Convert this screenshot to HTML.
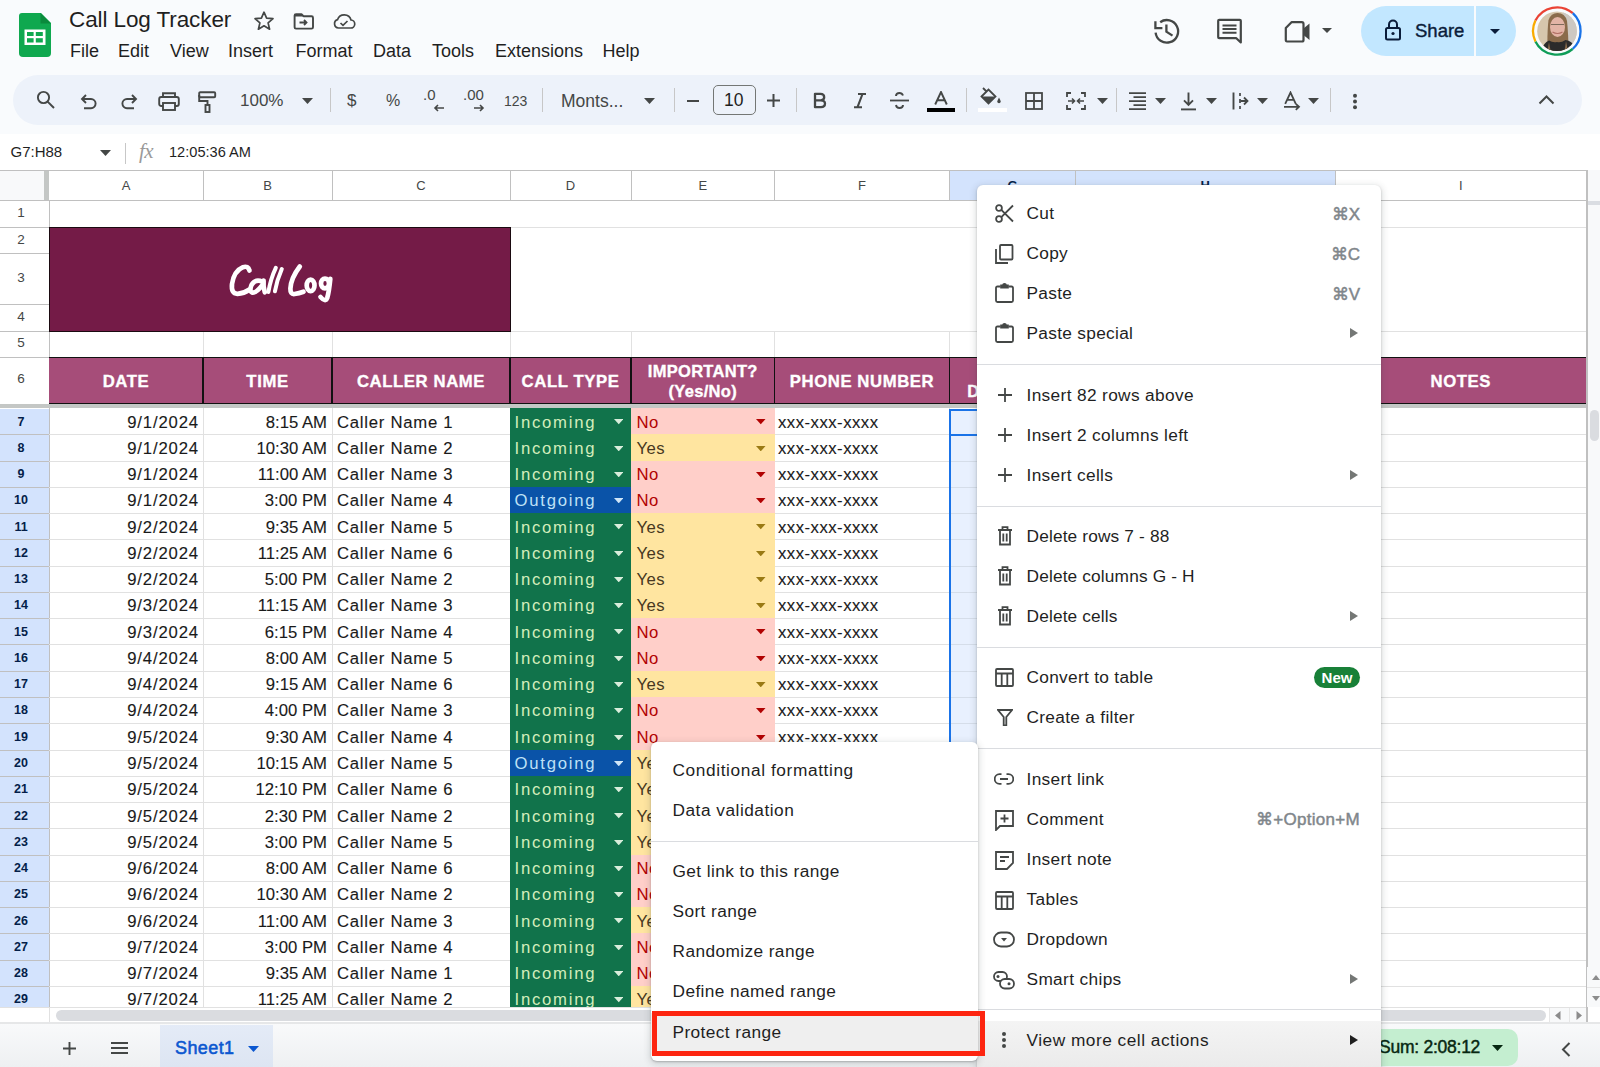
<!DOCTYPE html><html><head><meta charset="utf-8"><title>Call Log Tracker</title><style>
*{margin:0;padding:0;box-sizing:border-box}
html,body{width:1600px;height:1067px;overflow:hidden;background:#f9fbfd;font-family:"Liberation Sans",sans-serif;color:#1f1f1f}
div{position:absolute}
.t{white-space:pre}
</style></head><body>
<svg style="position:absolute;left:19px;top:13px;" width="32" height="44" viewBox="0 0 32 44">
<path d="M3 0 H22 L32 10 V40 Q32 44 28 44 H4 Q0 44 0 40 V3 Q0 0 3 0 Z" fill="#0fa84f"/>
<path d="M21.5 0 L32 10.5 H21.5 Z" fill="#0a8a3c"/>
<rect x="5.5" y="16.5" width="21" height="15.5" fill="#fff"/>
<rect x="8" y="19" width="6.6" height="4" fill="#0fa84f"/>
<rect x="16.8" y="19" width="7" height="4" fill="#0fa84f"/>
<rect x="8" y="25.2" width="6.6" height="4.3" fill="#0fa84f"/>
<rect x="16.8" y="25.2" width="7" height="4.3" fill="#0fa84f"/>
</svg>
<div class="t" style="left:69px;top:6px;height:28px;line-height:28px;font-size:22.5px;color:#1f1f1f;letter-spacing:-0.1px">Call Log Tracker</div>
<svg style="position:absolute;left:253px;top:10px;" width="22" height="22" viewBox="0 0 22 22"><path d="M11 2.2 L13.6 8.2 L20 8.7 L15.1 12.9 L16.6 19.2 L11 15.8 L5.4 19.2 L6.9 12.9 L2 8.7 L8.4 8.2 Z" fill="none" stroke="#444746" stroke-width="1.7" stroke-linejoin="round"/></svg>
<svg style="position:absolute;left:293px;top:12px;" width="22" height="18" viewBox="0 0 22 18"><path d="M3 2.2 H8.5 L10.5 4.2 H18.5 Q20 4.2 20 5.7 V15.2 Q20 16.6 18.5 16.6 H3 Q1.6 16.6 1.6 15.2 V3.6 Q1.6 2.2 3 2.2 Z" fill="none" stroke="#444746" stroke-width="1.9" stroke-linejoin="round"/><path d="M2 2.5 H8.5 L10.5 4.5 H2 Z" fill="#444746"/><path d="M6.5 10.5 H13.5 M11 8 L13.5 10.5 L11 13" fill="none" stroke="#444746" stroke-width="1.8"/></svg>
<svg style="position:absolute;left:332px;top:12px;" width="24" height="18" viewBox="0 0 24 18"><path d="M6.5 16 H18.5 A4 4 0 0 0 19 8 A7 7 0 0 0 5.6 7.6 A4.3 4.3 0 0 0 6.5 16 Z" fill="none" stroke="#444746" stroke-width="1.7"/><path d="M8.5 11 L11 13.4 L15.5 9" fill="none" stroke="#444746" stroke-width="1.7"/></svg>
<div class="t" style="left:70px;top:38px;height:26px;line-height:26px;font-size:18px;color:#1f1f1f">File</div>
<div class="t" style="left:118px;top:38px;height:26px;line-height:26px;font-size:18px;color:#1f1f1f">Edit</div>
<div class="t" style="left:170px;top:38px;height:26px;line-height:26px;font-size:18px;color:#1f1f1f">View</div>
<div class="t" style="left:228px;top:38px;height:26px;line-height:26px;font-size:18px;color:#1f1f1f">Insert</div>
<div class="t" style="left:295.5px;top:38px;height:26px;line-height:26px;font-size:18px;color:#1f1f1f">Format</div>
<div class="t" style="left:373px;top:38px;height:26px;line-height:26px;font-size:18px;color:#1f1f1f">Data</div>
<div class="t" style="left:432px;top:38px;height:26px;line-height:26px;font-size:18px;color:#1f1f1f">Tools</div>
<div class="t" style="left:495px;top:38px;height:26px;line-height:26px;font-size:18px;color:#1f1f1f">Extensions</div>
<div class="t" style="left:602.5px;top:38px;height:26px;line-height:26px;font-size:18px;color:#1f1f1f">Help</div>
<svg style="position:absolute;left:1153px;top:17px;" width="28" height="28" viewBox="0 0 28 28"><path d="M2.6 15.6 A11.3 11.3 0 1 0 7.2 5.2" fill="none" stroke="#444746" stroke-width="2.3"/><path d="M2.4 4.2 V11.2 H9.4" fill="none" stroke="#444746" stroke-width="2.3"/><path d="M13.4 7.5 V14.6 L19.5 18.6" fill="none" stroke="#444746" stroke-width="2.3"/></svg>
<svg style="position:absolute;left:1216px;top:18px;" width="27" height="27" viewBox="0 0 27 27"><path d="M2.2 2.8 Q2.2 1.8 3.2 1.8 H23.8 Q24.8 1.8 24.8 2.8 V24.5 L20.3 20.2 H3.2 Q2.2 20.2 2.2 19.2 Z" fill="none" stroke="#444746" stroke-width="2.2" stroke-linejoin="round"/><path d="M6.5 7.5 H20.5 M6.5 11.1 H20.5 M6.5 14.8 H20.5" stroke="#444746" stroke-width="2"/></svg>
<svg style="position:absolute;left:1284px;top:20px;" width="28" height="24" viewBox="0 0 28 24"><path d="M7.5 2.2 H17.8 Q19.5 2.2 19.5 4 V20 Q19.5 21.5 18 21.5 H3 Q1.8 21.5 1.8 20 V8 Z" fill="none" stroke="#444746" stroke-width="2.2" stroke-linejoin="round"/><path d="M19.5 8.5 L25.5 3.5 V20 L19.5 15 Z" fill="#444746"/></svg>
<svg style="position:absolute;left:1321px;top:27px;" width="12" height="7" viewBox="0 0 12 7"><path d="M1 1 H11 L6 6 Z" fill="#444746"/></svg>
<div style="left:1361px;top:6px;width:155px;height:50px;background:#c2e7ff;border-radius:25px"></div>
<div style="left:1474px;top:6px;width:1.5px;height:50px;background:#f9fbfd"></div>
<svg style="position:absolute;left:1384px;top:19px;" width="18" height="22" viewBox="0 0 18 22"><rect x="2" y="9" width="14" height="11.5" rx="1.5" fill="none" stroke="#0b1d3a" stroke-width="2"/><path d="M5 9 V5.5 A4 4 0 0 1 13 5.5 V9" fill="none" stroke="#0b1d3a" stroke-width="2"/><circle cx="9" cy="14.5" r="1.6" fill="#0b1d3a"/></svg>
<div class="t" style="left:1415px;top:17px;height:28px;line-height:28px;font-size:18.5px;color:#0b1d3a;-webkit-text-stroke:0.4px #0b1d3a;letter-spacing:0px">Share</div>
<svg style="position:absolute;left:1489px;top:28px;" width="12" height="7" viewBox="0 0 12 7"><path d="M1 1 H11 L6 6 Z" fill="#0b1d3a"/></svg>
<svg style="position:absolute;left:1527px;top:2px;" width="60" height="60" viewBox="0 0 60 60">
<defs><clipPath id="avc"><circle cx="30" cy="29.2" r="19.8"/></clipPath></defs>
<path d="M8.4 18.6 A24.3 24.3 0 0 1 45.8 11.2" fill="none" stroke="#ea4335" stroke-width="2.3"/>
<path d="M45.8 11.2 A24.3 24.3 0 0 1 45.6 47" fill="none" stroke="#1a73e8" stroke-width="2.3"/>
<path d="M45.6 47 A24.3 24.3 0 0 1 8.4 39.4" fill="none" stroke="#0f9d58" stroke-width="2.3"/>
<path d="M8.4 39.4 A24.3 24.3 0 0 1 8.4 18.6" fill="none" stroke="#f9ab00" stroke-width="2.3"/>
<g clip-path="url(#avc)">
<rect x="0" y="0" width="60" height="60" fill="#d6c6ad"/>
<rect x="36" y="0" width="24" height="60" fill="#cdc8c2"/>
<path d="M20.5 52 Q20 30 21.5 18 Q24 11 30.5 11 Q38 11 40 19 Q41.5 32 41.5 52 Z" fill="#8a6b4b"/>
<ellipse cx="30.5" cy="25" rx="7.5" ry="10" fill="#e3b4a6"/>
<path d="M24 22.5 H37" stroke="#7d6a5c" stroke-width="1.1"/>
<path d="M25.5 30 Q30.5 33 35.5 30" fill="none" stroke="#b06f64" stroke-width="1.2"/>
<path d="M14 50 Q16 41 22 38.5 Q26 41 30 40 Q34 41 38.5 38 Q45 39 48 45 L48 60 H14 Z" fill="#2b2b2b"/>
<path d="M22 40 Q23 48 25 52 L20 52 Z M39 39 Q38 48 36.5 52 L41.5 52 Z" fill="#8a6b4b"/>
</g>
</svg>
<div style="left:13px;top:75px;width:1569px;height:50px;background:#edf2fa;border-radius:25px"></div>
<svg style="position:absolute;left:36px;top:90px;" width="20" height="20" viewBox="0 0 20 20"><circle cx="7.5" cy="7.5" r="5.6" fill="none" stroke="#444746" stroke-width="1.9"/><path d="M11.6 11.6 L18 18" stroke="#444746" stroke-width="2"/></svg>
<svg style="position:absolute;left:80px;top:93px;" width="18" height="17" viewBox="0 0 18 17"><path d="M6 2 L2 6 L6 10" fill="none" stroke="#444746" stroke-width="1.9"/><path d="M2.5 6 H11 A4.6 4.6 0 0 1 11 15.2 H4" fill="none" stroke="#444746" stroke-width="1.9"/></svg>
<svg style="position:absolute;left:120px;top:93px;" width="18" height="17" viewBox="0 0 18 17"><path d="M12 2 L16 6 L12 10" fill="none" stroke="#444746" stroke-width="1.9"/><path d="M15.5 6 H7 A4.6 4.6 0 0 0 7 15.2 H14" fill="none" stroke="#444746" stroke-width="1.9"/></svg>
<svg style="position:absolute;left:158px;top:92px;" width="22" height="19" viewBox="0 0 22 19"><path d="M5 5 V1.2 H17 V5" fill="none" stroke="#444746" stroke-width="1.9"/><rect x="1.2" y="5" width="19.6" height="9" rx="2" fill="none" stroke="#444746" stroke-width="1.9"/><rect x="5" y="11" width="12" height="7" fill="#edf2fa" stroke="#444746" stroke-width="1.9"/></svg>
<svg style="position:absolute;left:198px;top:91px;" width="19" height="22" viewBox="0 0 19 22"><rect x="1.2" y="1.2" width="16" height="5" rx="1" fill="none" stroke="#444746" stroke-width="1.9"/><path d="M1.2 4 V10 H9.5 V14" fill="none" stroke="#444746" stroke-width="1.9"/><rect x="7.5" y="14" width="4" height="7" fill="none" stroke="#444746" stroke-width="1.9"/></svg>
<div class="t" style="left:240px;top:88px;height:26px;line-height:26px;font-size:17px;color:#444746">100%</div>
<svg style="position:absolute;left:302px;top:98px;" width="11" height="6" viewBox="0 0 11 6"><path d="M0 0 H11 L5.5 6 Z" fill="#444746"/></svg>
<div style="left:329.5px;top:88px;width:1px;height:24px;background:#c7c7c7"></div>
<div class="t" style="left:347px;top:88px;height:26px;line-height:26px;font-size:17px;color:#444746">$</div>
<div class="t" style="left:386px;top:88px;height:26px;line-height:26px;font-size:16px;color:#444746">%</div>
<div class="t" style="left:423px;top:84px;height:22px;line-height:22px;font-size:15px;color:#444746">.0</div>
<svg style="position:absolute;left:433px;top:104px;" width="12" height="8" viewBox="0 0 12 8"><path d="M11 4 H2 M5 1 L2 4 L5 7" fill="none" stroke="#444746" stroke-width="1.6"/></svg>
<div class="t" style="left:463px;top:84px;height:22px;line-height:22px;font-size:15px;color:#444746">.00</div>
<svg style="position:absolute;left:473px;top:104px;" width="12" height="8" viewBox="0 0 12 8"><path d="M1 4 H10 M7 1 L10 4 L7 7" fill="none" stroke="#444746" stroke-width="1.6"/></svg>
<div class="t" style="left:504px;top:88px;height:26px;line-height:26px;font-size:14px;color:#444746">123</div>
<div style="left:541.5px;top:88px;width:1px;height:24px;background:#c7c7c7"></div>
<div class="t" style="left:561px;top:88px;height:26px;line-height:26px;font-size:17.5px;color:#444746">Monts...</div>
<svg style="position:absolute;left:644px;top:98px;" width="11" height="6" viewBox="0 0 11 6"><path d="M0 0 H11 L5.5 6 Z" fill="#444746"/></svg>
<div style="left:674px;top:88px;width:1px;height:24px;background:#c7c7c7"></div>
<div style="left:687px;top:99.5px;width:12px;height:2px;background:#444746"></div>
<div style="left:713px;top:85px;width:43px;height:30px;border:1.3px solid #747775;border-radius:5px"></div>
<div class="t" style="left:724px;top:87px;height:26px;line-height:26px;font-size:17.5px;color:#1f1f1f">10</div>
<svg style="position:absolute;left:767px;top:94px;" width="13" height="13" viewBox="0 0 13 13"><path d="M6.5 0 V13 M0 6.5 H13" stroke="#444746" stroke-width="2"/></svg>
<div style="left:795.5px;top:88px;width:1px;height:24px;background:#c7c7c7"></div>
<svg style="position:absolute;left:812px;top:92px;" width="16" height="17" viewBox="0 0 16 17"><path d="M3 1.8 H8.5 Q12.2 1.8 12.2 5.3 Q12.2 8.2 8.8 8.3 Q13 8.4 13 11.6 Q13 15.2 9 15.2 H3 Z M3 8.3 H8.8" fill="none" stroke="#444746" stroke-width="2.3" stroke-linejoin="round"/></svg>
<svg style="position:absolute;left:852px;top:92px;" width="16" height="17" viewBox="0 0 16 17"><path d="M6 2 H14 M2 15.2 H10 M10.5 2 L5.5 15.2" fill="none" stroke="#444746" stroke-width="2.1"/></svg>
<svg style="position:absolute;left:889px;top:91px;" width="21" height="19" viewBox="0 0 21 19"><path d="M1 9.5 H20" stroke="#444746" stroke-width="1.8"/><path d="M14 4.5 Q13 2 10.5 2 Q7 2 7 5 M7 14 Q7.5 17 10.5 17 Q14 17 14 14" fill="none" stroke="#444746" stroke-width="1.9"/></svg>
<svg style="position:absolute;left:934px;top:91px;" width="14" height="14" viewBox="0 0 14 14"><path d="M1.2 13.5 L7 1 L12.8 13.5 M3.3 9.3 H10.7" fill="none" stroke="#444746" stroke-width="1.9"/></svg>
<div style="left:927px;top:107.5px;width:28px;height:4.5px;background:#000"></div>
<div style="left:966px;top:88px;width:1px;height:24px;background:#c7c7c7"></div>
<svg style="position:absolute;left:979px;top:86px;" width="26" height="20" viewBox="0 0 26 20"><path d="M4 2 L7 5 M2.5 10.5 L9.5 3.5 L16.5 10.5 L9.5 17.5 Z" fill="none" stroke="#444746" stroke-width="1.8"/><path d="M2.5 10.5 H16.5 L9.5 17.5 Z" fill="#444746"/><path d="M20 11.5 Q18.3 14.5 18.3 15.5 A1.7 1.7 0 0 0 21.7 15.5 Q21.7 14.5 20 11.5Z" fill="#444746"/></svg>
<div style="left:978px;top:107.5px;width:29px;height:4.5px;background:#fff"></div>
<svg style="position:absolute;left:1025px;top:92px;" width="18" height="18" viewBox="0 0 18 18"><rect x="1" y="1" width="16" height="16" fill="none" stroke="#444746" stroke-width="1.8"/><path d="M9 1 V17 M1 9 H17" stroke="#444746" stroke-width="1.8"/></svg>
<svg style="position:absolute;left:1066px;top:92px;" width="20" height="18" viewBox="0 0 20 18"><path d="M1 5 V1 H5 M15 1 H19 V5 M1 13 V17 H5 M15 17 H19 V13" fill="none" stroke="#444746" stroke-width="1.8"/><path d="M2 9 H8 M6 6.5 L8.5 9 L6 11.5 M18 9 H12 M14 6.5 L11.5 9 L14 11.5" fill="none" stroke="#444746" stroke-width="1.6"/></svg>
<svg style="position:absolute;left:1097px;top:98px;" width="11" height="6" viewBox="0 0 11 6"><path d="M0 0 H11 L5.5 6 Z" fill="#444746"/></svg>
<div style="left:1116px;top:88px;width:1px;height:24px;background:#c7c7c7"></div>
<svg style="position:absolute;left:1128px;top:91px;" width="19" height="20" viewBox="0 0 19 20"><path d="M1 2.2 H18 M5.5 6.2 H18 M1 10.2 H18 M5.5 14.2 H18 M1 18.2 H18" stroke="#444746" stroke-width="1.8"/></svg>
<svg style="position:absolute;left:1155px;top:98px;" width="11" height="6" viewBox="0 0 11 6"><path d="M0 0 H11 L5.5 6 Z" fill="#444746"/></svg>
<svg style="position:absolute;left:1180px;top:91px;" width="17" height="21" viewBox="0 0 17 21"><path d="M8.5 1.5 V13.8 M4 9.3 L8.5 13.8 L13 9.3" fill="none" stroke="#444746" stroke-width="1.9"/><path d="M1 18.4 H16" stroke="#444746" stroke-width="1.9"/></svg>
<svg style="position:absolute;left:1206px;top:98px;" width="11" height="6" viewBox="0 0 11 6"><path d="M0 0 H11 L5.5 6 Z" fill="#444746"/></svg>
<svg style="position:absolute;left:1231px;top:92px;" width="18" height="18" viewBox="0 0 18 18"><path d="M2.5 0.5 V17.5" stroke="#444746" stroke-width="1.9"/><path d="M9.5 9 H16.5 M13 5.5 L16.5 9 L13 12.5" fill="none" stroke="#444746" stroke-width="1.8"/><path d="M9 1 V4 M9 7 V11 M9 14 V17" stroke="#444746" stroke-width="1.7"/></svg>
<svg style="position:absolute;left:1257px;top:98px;" width="11" height="6" viewBox="0 0 11 6"><path d="M0 0 H11 L5.5 6 Z" fill="#444746"/></svg>
<svg style="position:absolute;left:1283px;top:91px;" width="19" height="21" viewBox="0 0 19 21"><path d="M2.2 12.8 L7.5 1.5 L12.8 12.8 M4.2 8.8 H10.8" fill="none" stroke="#444746" stroke-width="1.8"/><path d="M1 15.8 H16 M12.8 12.8 L16 15.8 L12.8 18.8" fill="none" stroke="#444746" stroke-width="1.8"/></svg>
<svg style="position:absolute;left:1308px;top:98px;" width="11" height="6" viewBox="0 0 11 6"><path d="M0 0 H11 L5.5 6 Z" fill="#444746"/></svg>
<div style="left:1329.5px;top:88px;width:1px;height:24px;background:#c7c7c7"></div>
<svg style="position:absolute;left:1351px;top:92px;" width="8" height="18" viewBox="0 0 8 18"><circle cx="4" cy="3.8" r="2" fill="#444746"/><circle cx="4" cy="9.6" r="2" fill="#444746"/><circle cx="4" cy="15.3" r="2" fill="#444746"/></svg>
<svg style="position:absolute;left:1538px;top:95px;" width="17" height="10" viewBox="0 0 17 10"><path d="M1.5 8.5 L8.5 1.5 L15.5 8.5" fill="none" stroke="#444746" stroke-width="2"/></svg>
<div style="left:0px;top:134px;width:1600px;height:36.5px;background:#fff"></div>
<div class="t" style="left:10.5px;top:138.5px;height:26px;line-height:26px;font-size:15px;color:#1f1f1f">G7:H88</div>
<svg style="position:absolute;left:100px;top:149.5px;" width="11" height="6" viewBox="0 0 11 6"><path d="M0 0 H11 L5.5 6 Z" fill="#444746"/></svg>
<div style="left:125px;top:142.5px;width:1.3px;height:21px;background:#c7c7c7"></div>
<div class="t" style="left:139px;top:137px;height:28px;line-height:28px;font-size:21px;font-style:italic;font-family:'Liberation Serif';color:#9a9a9a;letter-spacing:-0.5px">fx</div>
<div class="t" style="left:169px;top:138.5px;height:26px;line-height:26px;font-size:14.6px;color:#1f1f1f">12:05:36 AM</div>
<div style="left:0px;top:170px;width:1600px;height:853px;background:#fff"></div>
<div style="left:0px;top:170px;width:1586.5px;height:30.5px;background:#fff"></div>
<div style="left:0px;top:170.5px;width:44px;height:30px;background:#f8f9fa"></div>
<div style="left:44px;top:170.5px;width:5px;height:30px;background:#c4c7c5"></div>
<div style="left:949.5px;top:170.5px;width:386px;height:30px;background:#d3e3fd"></div>
<div style="left:0px;top:170px;width:1600px;height:1px;background:#c0c0c0"></div>
<div style="left:0px;top:200px;width:1586.5px;height:1px;background:#c0c0c0"></div>
<div class="t" style="left:49px;top:171px;width:154px;height:29px;line-height:29px;text-align:center;font-size:13px;color:#444746">A</div>
<div class="t" style="left:203px;top:171px;width:129px;height:29px;line-height:29px;text-align:center;font-size:13px;color:#444746">B</div>
<div class="t" style="left:332px;top:171px;width:178px;height:29px;line-height:29px;text-align:center;font-size:13px;color:#444746">C</div>
<div class="t" style="left:510px;top:171px;width:121px;height:29px;line-height:29px;text-align:center;font-size:13px;color:#444746">D</div>
<div class="t" style="left:631px;top:171px;width:143.5px;height:29px;line-height:29px;text-align:center;font-size:13px;color:#444746">E</div>
<div class="t" style="left:774.5px;top:171px;width:175.0px;height:29px;line-height:29px;text-align:center;font-size:13px;color:#444746">F</div>
<div class="t" style="left:949.5px;top:171px;width:126.0px;height:29px;line-height:29px;text-align:center;font-size:13px;color:#041e49;font-weight:bold">G</div>
<div class="t" style="left:1075.5px;top:171px;width:259.5px;height:29px;line-height:29px;text-align:center;font-size:13px;color:#041e49;font-weight:bold">H</div>
<div class="t" style="left:1335px;top:171px;width:251.5px;height:29px;line-height:29px;text-align:center;font-size:13px;color:#444746">I</div>
<div style="left:202.5px;top:170.5px;width:1px;height:30px;background:#c0c0c0"></div>
<div style="left:331.5px;top:170.5px;width:1px;height:30px;background:#c0c0c0"></div>
<div style="left:509.5px;top:170.5px;width:1px;height:30px;background:#c0c0c0"></div>
<div style="left:630.5px;top:170.5px;width:1px;height:30px;background:#c0c0c0"></div>
<div style="left:774.0px;top:170.5px;width:1px;height:30px;background:#c0c0c0"></div>
<div style="left:949.0px;top:170.5px;width:1px;height:30px;background:#c0c0c0"></div>
<div style="left:1075.0px;top:170.5px;width:1px;height:30px;background:#c0c0c0"></div>
<div style="left:1334.5px;top:170.5px;width:1px;height:30px;background:#c0c0c0"></div>
<div style="left:1586.0px;top:170.5px;width:1px;height:30px;background:#c0c0c0"></div>
<div style="left:0px;top:200.5px;width:49px;height:823px;background:#fff"></div>
<div style="left:0px;top:408.5px;width:49px;height:614.5px;background:#d3e3fd"></div>
<div style="left:48.5px;top:200.5px;width:1px;height:823px;background:#c0c0c0"></div>
<div class="t" style="left:0px;top:200.5px;width:42px;height:27.0px;line-height:24.0px;text-align:center;font-size:13.5px;color:#444746">1</div>
<div style="left:0px;top:227.0px;width:49px;height:1px;background:#c0c0c0"></div>
<div class="t" style="left:0px;top:227.5px;width:42px;height:26.19999999999999px;line-height:23.19999999999999px;text-align:center;font-size:13.5px;color:#444746">2</div>
<div style="left:0px;top:253.2px;width:49px;height:1px;background:#c0c0c0"></div>
<div class="t" style="left:0px;top:253.7px;width:42px;height:51.0px;line-height:48.0px;text-align:center;font-size:13.5px;color:#444746">3</div>
<div style="left:0px;top:304.2px;width:49px;height:1px;background:#c0c0c0"></div>
<div class="t" style="left:0px;top:304.7px;width:42px;height:26.5px;line-height:23.5px;text-align:center;font-size:13.5px;color:#444746">4</div>
<div style="left:0px;top:330.7px;width:49px;height:1px;background:#c0c0c0"></div>
<div class="t" style="left:0px;top:331.2px;width:42px;height:26.19999999999999px;line-height:23.19999999999999px;text-align:center;font-size:13.5px;color:#444746">5</div>
<div style="left:0px;top:356.9px;width:49px;height:1px;background:#c0c0c0"></div>
<div class="t" style="left:0px;top:357.4px;width:42px;height:46.30000000000001px;line-height:43.30000000000001px;text-align:center;font-size:13.5px;color:#444746">6</div>
<div class="t" style="left:0px;top:408.5px;width:42px;height:26.269999999999982px;line-height:27.269999999999982px;text-align:center;font-size:12.5px;color:#041e49;font-weight:bold">7</div>
<div style="left:0px;top:434.27px;width:49px;height:1px;background:#c0c0c0"></div>
<div class="t" style="left:0px;top:434.77px;width:42px;height:26.27000000000004px;line-height:27.27000000000004px;text-align:center;font-size:12.5px;color:#041e49;font-weight:bold">8</div>
<div style="left:0px;top:460.54px;width:49px;height:1px;background:#c0c0c0"></div>
<div class="t" style="left:0px;top:461.04px;width:42px;height:26.269999999999982px;line-height:27.269999999999982px;text-align:center;font-size:12.5px;color:#041e49;font-weight:bold">9</div>
<div style="left:0px;top:486.81px;width:49px;height:1px;background:#c0c0c0"></div>
<div class="t" style="left:0px;top:487.31px;width:42px;height:26.27000000000004px;line-height:27.27000000000004px;text-align:center;font-size:12.5px;color:#041e49;font-weight:bold">10</div>
<div style="left:0px;top:513.08px;width:49px;height:1px;background:#c0c0c0"></div>
<div class="t" style="left:0px;top:513.58px;width:42px;height:26.269999999999982px;line-height:27.269999999999982px;text-align:center;font-size:12.5px;color:#041e49;font-weight:bold">11</div>
<div style="left:0px;top:539.35px;width:49px;height:1px;background:#c0c0c0"></div>
<div class="t" style="left:0px;top:539.85px;width:42px;height:26.269999999999982px;line-height:27.269999999999982px;text-align:center;font-size:12.5px;color:#041e49;font-weight:bold">12</div>
<div style="left:0px;top:565.62px;width:49px;height:1px;background:#c0c0c0"></div>
<div class="t" style="left:0px;top:566.12px;width:42px;height:26.269999999999982px;line-height:27.269999999999982px;text-align:center;font-size:12.5px;color:#041e49;font-weight:bold">13</div>
<div style="left:0px;top:591.89px;width:49px;height:1px;background:#c0c0c0"></div>
<div class="t" style="left:0px;top:592.39px;width:42px;height:26.269999999999982px;line-height:27.269999999999982px;text-align:center;font-size:12.5px;color:#041e49;font-weight:bold">14</div>
<div style="left:0px;top:618.16px;width:49px;height:1px;background:#c0c0c0"></div>
<div class="t" style="left:0px;top:618.66px;width:42px;height:26.270000000000095px;line-height:27.270000000000095px;text-align:center;font-size:12.5px;color:#041e49;font-weight:bold">15</div>
<div style="left:0px;top:644.4300000000001px;width:49px;height:1px;background:#c0c0c0"></div>
<div class="t" style="left:0px;top:644.9300000000001px;width:42px;height:26.269999999999982px;line-height:27.269999999999982px;text-align:center;font-size:12.5px;color:#041e49;font-weight:bold">16</div>
<div style="left:0px;top:670.7px;width:49px;height:1px;background:#c0c0c0"></div>
<div class="t" style="left:0px;top:671.2px;width:42px;height:26.269999999999982px;line-height:27.269999999999982px;text-align:center;font-size:12.5px;color:#041e49;font-weight:bold">17</div>
<div style="left:0px;top:696.97px;width:49px;height:1px;background:#c0c0c0"></div>
<div class="t" style="left:0px;top:697.47px;width:42px;height:26.269999999999982px;line-height:27.269999999999982px;text-align:center;font-size:12.5px;color:#041e49;font-weight:bold">18</div>
<div style="left:0px;top:723.24px;width:49px;height:1px;background:#c0c0c0"></div>
<div class="t" style="left:0px;top:723.74px;width:42px;height:26.269999999999982px;line-height:27.269999999999982px;text-align:center;font-size:12.5px;color:#041e49;font-weight:bold">19</div>
<div style="left:0px;top:749.51px;width:49px;height:1px;background:#c0c0c0"></div>
<div class="t" style="left:0px;top:750.01px;width:42px;height:26.269999999999982px;line-height:27.269999999999982px;text-align:center;font-size:12.5px;color:#041e49;font-weight:bold">20</div>
<div style="left:0px;top:775.78px;width:49px;height:1px;background:#c0c0c0"></div>
<div class="t" style="left:0px;top:776.28px;width:42px;height:26.269999999999982px;line-height:27.269999999999982px;text-align:center;font-size:12.5px;color:#041e49;font-weight:bold">21</div>
<div style="left:0px;top:802.05px;width:49px;height:1px;background:#c0c0c0"></div>
<div class="t" style="left:0px;top:802.55px;width:42px;height:26.269999999999982px;line-height:27.269999999999982px;text-align:center;font-size:12.5px;color:#041e49;font-weight:bold">22</div>
<div style="left:0px;top:828.3199999999999px;width:49px;height:1px;background:#c0c0c0"></div>
<div class="t" style="left:0px;top:828.8199999999999px;width:42px;height:26.269999999999982px;line-height:27.269999999999982px;text-align:center;font-size:12.5px;color:#041e49;font-weight:bold">23</div>
<div style="left:0px;top:854.5899999999999px;width:49px;height:1px;background:#c0c0c0"></div>
<div class="t" style="left:0px;top:855.0899999999999px;width:42px;height:26.270000000000095px;line-height:27.270000000000095px;text-align:center;font-size:12.5px;color:#041e49;font-weight:bold">24</div>
<div style="left:0px;top:880.86px;width:49px;height:1px;background:#c0c0c0"></div>
<div class="t" style="left:0px;top:881.36px;width:42px;height:26.269999999999982px;line-height:27.269999999999982px;text-align:center;font-size:12.5px;color:#041e49;font-weight:bold">25</div>
<div style="left:0px;top:907.13px;width:49px;height:1px;background:#c0c0c0"></div>
<div class="t" style="left:0px;top:907.63px;width:42px;height:26.269999999999982px;line-height:27.269999999999982px;text-align:center;font-size:12.5px;color:#041e49;font-weight:bold">26</div>
<div style="left:0px;top:933.4px;width:49px;height:1px;background:#c0c0c0"></div>
<div class="t" style="left:0px;top:933.9px;width:42px;height:26.269999999999982px;line-height:27.269999999999982px;text-align:center;font-size:12.5px;color:#041e49;font-weight:bold">27</div>
<div style="left:0px;top:959.67px;width:49px;height:1px;background:#c0c0c0"></div>
<div class="t" style="left:0px;top:960.17px;width:42px;height:26.269999999999982px;line-height:27.269999999999982px;text-align:center;font-size:12.5px;color:#041e49;font-weight:bold">28</div>
<div style="left:0px;top:985.9399999999999px;width:49px;height:1px;background:#c0c0c0"></div>
<div class="t" style="left:0px;top:986.4399999999999px;width:42px;height:26.270000000000095px;line-height:27.270000000000095px;text-align:center;font-size:12.5px;color:#041e49;font-weight:bold">29</div>
<div style="left:0px;top:1012.21px;width:49px;height:1px;background:#c0c0c0"></div>
<div style="left:49px;top:227.0px;width:1537.5px;height:1px;background:#e1e1e1"></div>
<div style="left:49px;top:330.7px;width:1537.5px;height:1px;background:#e1e1e1"></div>
<div style="left:49px;top:356.9px;width:1537.5px;height:1px;background:#e1e1e1"></div>
<div style="left:49px;top:434.27px;width:1537.5px;height:1px;background:#e1e1e1"></div>
<div style="left:49px;top:460.54px;width:1537.5px;height:1px;background:#e1e1e1"></div>
<div style="left:49px;top:486.81px;width:1537.5px;height:1px;background:#e1e1e1"></div>
<div style="left:49px;top:513.08px;width:1537.5px;height:1px;background:#e1e1e1"></div>
<div style="left:49px;top:539.35px;width:1537.5px;height:1px;background:#e1e1e1"></div>
<div style="left:49px;top:565.62px;width:1537.5px;height:1px;background:#e1e1e1"></div>
<div style="left:49px;top:591.89px;width:1537.5px;height:1px;background:#e1e1e1"></div>
<div style="left:49px;top:618.16px;width:1537.5px;height:1px;background:#e1e1e1"></div>
<div style="left:49px;top:644.4300000000001px;width:1537.5px;height:1px;background:#e1e1e1"></div>
<div style="left:49px;top:670.7px;width:1537.5px;height:1px;background:#e1e1e1"></div>
<div style="left:49px;top:696.97px;width:1537.5px;height:1px;background:#e1e1e1"></div>
<div style="left:49px;top:723.24px;width:1537.5px;height:1px;background:#e1e1e1"></div>
<div style="left:49px;top:749.51px;width:1537.5px;height:1px;background:#e1e1e1"></div>
<div style="left:49px;top:775.78px;width:1537.5px;height:1px;background:#e1e1e1"></div>
<div style="left:49px;top:802.05px;width:1537.5px;height:1px;background:#e1e1e1"></div>
<div style="left:49px;top:828.3199999999999px;width:1537.5px;height:1px;background:#e1e1e1"></div>
<div style="left:49px;top:854.5899999999999px;width:1537.5px;height:1px;background:#e1e1e1"></div>
<div style="left:49px;top:880.86px;width:1537.5px;height:1px;background:#e1e1e1"></div>
<div style="left:49px;top:907.13px;width:1537.5px;height:1px;background:#e1e1e1"></div>
<div style="left:49px;top:933.4px;width:1537.5px;height:1px;background:#e1e1e1"></div>
<div style="left:49px;top:959.67px;width:1537.5px;height:1px;background:#e1e1e1"></div>
<div style="left:49px;top:985.9399999999999px;width:1537.5px;height:1px;background:#e1e1e1"></div>
<div style="left:49px;top:1012.21px;width:1537.5px;height:1px;background:#e1e1e1"></div>
<div style="left:202.5px;top:331.2px;width:1px;height:691.8px;background:#e1e1e1"></div>
<div style="left:331.5px;top:331.2px;width:1px;height:691.8px;background:#e1e1e1"></div>
<div style="left:509.5px;top:331.2px;width:1px;height:691.8px;background:#e1e1e1"></div>
<div style="left:630.5px;top:331.2px;width:1px;height:691.8px;background:#e1e1e1"></div>
<div style="left:774.0px;top:331.2px;width:1px;height:691.8px;background:#e1e1e1"></div>
<div style="left:949.0px;top:331.2px;width:1px;height:691.8px;background:#e1e1e1"></div>
<div style="left:1075.0px;top:331.2px;width:1px;height:691.8px;background:#e1e1e1"></div>
<div style="left:1334.5px;top:331.2px;width:1px;height:691.8px;background:#e1e1e1"></div>
<div style="left:1586.0px;top:331.2px;width:1px;height:691.8px;background:#e1e1e1"></div>
<div style="left:949.5px;top:408.5px;width:386px;height:614.5px;background:#e8f0fe"></div>
<div style="left:949.5px;top:434.27px;width:386px;height:1px;background:#d5dde9"></div>
<div style="left:949.5px;top:460.54px;width:386px;height:1px;background:#d5dde9"></div>
<div style="left:949.5px;top:486.81px;width:386px;height:1px;background:#d5dde9"></div>
<div style="left:949.5px;top:513.08px;width:386px;height:1px;background:#d5dde9"></div>
<div style="left:949.5px;top:539.35px;width:386px;height:1px;background:#d5dde9"></div>
<div style="left:949.5px;top:565.62px;width:386px;height:1px;background:#d5dde9"></div>
<div style="left:949.5px;top:591.89px;width:386px;height:1px;background:#d5dde9"></div>
<div style="left:949.5px;top:618.16px;width:386px;height:1px;background:#d5dde9"></div>
<div style="left:949.5px;top:644.4300000000001px;width:386px;height:1px;background:#d5dde9"></div>
<div style="left:949.5px;top:670.7px;width:386px;height:1px;background:#d5dde9"></div>
<div style="left:949.5px;top:696.97px;width:386px;height:1px;background:#d5dde9"></div>
<div style="left:949.5px;top:723.24px;width:386px;height:1px;background:#d5dde9"></div>
<div style="left:949.5px;top:749.51px;width:386px;height:1px;background:#d5dde9"></div>
<div style="left:949.5px;top:775.78px;width:386px;height:1px;background:#d5dde9"></div>
<div style="left:949.5px;top:802.05px;width:386px;height:1px;background:#d5dde9"></div>
<div style="left:949.5px;top:828.3199999999999px;width:386px;height:1px;background:#d5dde9"></div>
<div style="left:949.5px;top:854.5899999999999px;width:386px;height:1px;background:#d5dde9"></div>
<div style="left:949.5px;top:880.86px;width:386px;height:1px;background:#d5dde9"></div>
<div style="left:949.5px;top:907.13px;width:386px;height:1px;background:#d5dde9"></div>
<div style="left:949.5px;top:933.4px;width:386px;height:1px;background:#d5dde9"></div>
<div style="left:949.5px;top:959.67px;width:386px;height:1px;background:#d5dde9"></div>
<div style="left:949.5px;top:985.9399999999999px;width:386px;height:1px;background:#d5dde9"></div>
<div style="left:949.5px;top:1012.21px;width:386px;height:1px;background:#d5dde9"></div>
<div style="left:949px;top:408.5px;width:1.8px;height:614.5px;background:#1a73e8"></div>
<div style="left:949px;top:409.0px;width:30px;height:1.5px;background:#1a73e8"></div>
<div style="left:949px;top:433.77px;width:30px;height:1.8px;background:#1a73e8"></div>
<div style="left:49px;top:227px;width:461.5px;height:104.5px;background:#741b47;border:1.5px solid #1a0a10"></div>
<svg style="position:absolute;left:220px;top:255px;" width="120" height="50" viewBox="0 0 120 50"><g fill="none" stroke="#fff" stroke-width="4.7" stroke-linecap="round" stroke-linejoin="round"><path d="M29.5 15.5 Q28 10.5 23 12.2 Q14 16 12 29 Q11 39 17.5 38.8 Q24 38.5 29.5 34.5"/><path d="M42.5 26.8 Q35.5 23.5 31.5 30 Q29 36.5 32.2 37.6 Q36 38.2 42.5 30"/><path d="M43.6 25.5 Q43 32 44.8 37.3"/><path d="M55.8 12.8 Q50.5 24 48.4 37" stroke-width="4"/><path d="M61.8 14 Q57 25 54.9 36.3" stroke-width="4"/><path d="M79.8 11.5 Q71 23 70.4 33.5 Q70.2 39.5 74.5 39 Q79 38.5 83.5 36.8"/><ellipse cx="90.6" cy="30.4" rx="3.9" ry="5.8"/><ellipse cx="105" cy="28.5" rx="4" ry="4.8"/><path d="M110.3 23.8 Q109 37 107.2 43 Q105.5 47.5 100.5 42"/></g></svg>
<div style="left:49px;top:357px;width:1537.5px;height:47px;background:#a64d79"></div>
<div style="left:49px;top:357px;width:1537.5px;height:1.3px;background:#111"></div>
<div style="left:49px;top:402.7px;width:1537.5px;height:1.3px;background:#111"></div>
<div style="left:202.4px;top:357px;width:1.3px;height:47px;background:#111"></div>
<div style="left:331.4px;top:357px;width:1.3px;height:47px;background:#111"></div>
<div style="left:509.4px;top:357px;width:1.3px;height:47px;background:#111"></div>
<div style="left:630.4px;top:357px;width:1.3px;height:47px;background:#111"></div>
<div style="left:773.9px;top:357px;width:1.3px;height:47px;background:#111"></div>
<div style="left:948.9px;top:357px;width:1.3px;height:47px;background:#111"></div>
<div style="left:1074.9px;top:357px;width:1.3px;height:47px;background:#111"></div>
<div style="left:1334.4px;top:357px;width:1.3px;height:47px;background:#111"></div>
<div style="left:1585.9px;top:357px;width:1.3px;height:47px;background:#111"></div>
<div class="t" style="left:49px;top:359px;width:154px;height:46px;line-height:46px;text-align:center;font-size:16.7px;font-weight:bold;color:#fff;letter-spacing:0.6px;-webkit-text-stroke:0.35px #fff">DATE</div>
<div class="t" style="left:203px;top:359px;width:129px;height:46px;line-height:46px;text-align:center;font-size:16.7px;font-weight:bold;color:#fff;letter-spacing:0.6px;-webkit-text-stroke:0.35px #fff">TIME</div>
<div class="t" style="left:332px;top:359px;width:178px;height:46px;line-height:46px;text-align:center;font-size:16.7px;font-weight:bold;color:#fff;letter-spacing:0.6px;-webkit-text-stroke:0.35px #fff">CALLER NAME</div>
<div class="t" style="left:510px;top:359px;width:121px;height:46px;line-height:46px;text-align:center;font-size:16.7px;font-weight:bold;color:#fff;letter-spacing:0.6px;-webkit-text-stroke:0.35px #fff">CALL TYPE</div>
<div class="t" style="left:631px;top:361px;width:143.5px;height:40px;line-height:20px;text-align:center;font-size:16.5px;font-weight:bold;color:#fff;letter-spacing:0.3px;-webkit-text-stroke:0.35px #fff">IMPORTANT?
(Yes/No)</div>
<div class="t" style="left:774.5px;top:359px;width:175.0px;height:46px;line-height:46px;text-align:center;font-size:16.7px;font-weight:bold;color:#fff;letter-spacing:0.6px;-webkit-text-stroke:0.35px #fff">PHONE NUMBER</div>
<div class="t" style="left:949.5px;top:361px;width:126.0px;height:40px;line-height:20px;text-align:center;font-size:16.5px;font-weight:bold;color:#fff;letter-spacing:0.6px;-webkit-text-stroke:0.35px #fff">CALL
DURATION</div>
<div class="t" style="left:1335px;top:359px;width:251.5px;height:46px;line-height:46px;text-align:center;font-size:16.7px;font-weight:bold;color:#fff;letter-spacing:0.6px;-webkit-text-stroke:0.35px #fff">NOTES</div>
<div style="left:0px;top:403.7px;width:1586.5px;height:4.8px;background:#c4c7c5"></div>
<div style="left:510px;top:408.0px;width:121px;height:26.769999999999982px;background:#11734b"></div>
<div style="left:510px;top:434.27px;width:121px;height:1px;background:rgba(0,0,0,0.12)"></div>
<div class="t" style="left:514.5px;top:409.5px;height:26.269999999999982px;line-height:26.269999999999982px;font-size:16.7px;color:#d4edbc;letter-spacing:1.75px">Incoming</div>
<svg style="position:absolute;left:613.5px;top:419.3px;" width="9.5" height="5.3" viewBox="0 0 9.5 5.3"><path d="M0 0 H9.5 L4.75 5.3 Z" fill="#d9eedc"/></svg>
<div style="left:631px;top:408.0px;width:143.5px;height:26.769999999999982px;background:#ffcfc9"></div>
<div style="left:631px;top:434.27px;width:143.5px;height:1px;background:rgba(0,0,0,0.06)"></div>
<div class="t" style="left:636.5px;top:409.5px;height:26.269999999999982px;line-height:26.269999999999982px;font-size:16.7px;color:#b10202;letter-spacing:0.4px">No</div>
<svg style="position:absolute;left:756px;top:419.3px;" width="9.5" height="5.3" viewBox="0 0 9.5 5.3"><path d="M0 0 H9.5 L4.75 5.3 Z" fill="#b10202"/></svg>
<div class="t" style="left:49px;top:409.5px;width:150px;height:26.269999999999982px;line-height:26.269999999999982px;text-align:right;font-size:16.7px;color:#1a1a1a;-webkit-text-stroke:0.12px #1a1a1a;letter-spacing:0.85px">9/1/2024</div>
<div class="t" style="left:203px;top:409.5px;width:124px;height:26.269999999999982px;line-height:26.269999999999982px;text-align:right;font-size:16.7px;color:#1a1a1a;-webkit-text-stroke:0.12px #1a1a1a">8:15 AM</div>
<div class="t" style="left:337px;top:409.5px;height:26.269999999999982px;line-height:26.269999999999982px;font-size:16.7px;color:#1a1a1a;-webkit-text-stroke:0.12px #1a1a1a;letter-spacing:0.75px">Caller Name 1</div>
<div class="t" style="left:778px;top:409.5px;height:26.269999999999982px;line-height:26.269999999999982px;font-size:16.7px;color:#1a1a1a;-webkit-text-stroke:0.12px #1a1a1a;letter-spacing:0.5px">xxx-xxx-xxxx</div>
<div style="left:510px;top:434.27px;width:121px;height:26.77000000000004px;background:#11734b"></div>
<div style="left:510px;top:460.54px;width:121px;height:1px;background:rgba(0,0,0,0.12)"></div>
<div class="t" style="left:514.5px;top:435.77px;height:26.27000000000004px;line-height:26.27000000000004px;font-size:16.7px;color:#d4edbc;letter-spacing:1.75px">Incoming</div>
<svg style="position:absolute;left:613.5px;top:445.57px;" width="9.5" height="5.3" viewBox="0 0 9.5 5.3"><path d="M0 0 H9.5 L4.75 5.3 Z" fill="#d9eedc"/></svg>
<div style="left:631px;top:434.27px;width:143.5px;height:26.77000000000004px;background:#ffe5a0"></div>
<div style="left:631px;top:460.54px;width:143.5px;height:1px;background:rgba(0,0,0,0.06)"></div>
<div class="t" style="left:636.5px;top:435.77px;height:26.27000000000004px;line-height:26.27000000000004px;font-size:16.7px;color:#473821;letter-spacing:0.4px">Yes</div>
<svg style="position:absolute;left:756px;top:445.57px;" width="9.5" height="5.3" viewBox="0 0 9.5 5.3"><path d="M0 0 H9.5 L4.75 5.3 Z" fill="#9a7a14"/></svg>
<div class="t" style="left:49px;top:435.77px;width:150px;height:26.27000000000004px;line-height:26.27000000000004px;text-align:right;font-size:16.7px;color:#1a1a1a;-webkit-text-stroke:0.12px #1a1a1a;letter-spacing:0.85px">9/1/2024</div>
<div class="t" style="left:203px;top:435.77px;width:124px;height:26.27000000000004px;line-height:26.27000000000004px;text-align:right;font-size:16.7px;color:#1a1a1a;-webkit-text-stroke:0.12px #1a1a1a">10:30 AM</div>
<div class="t" style="left:337px;top:435.77px;height:26.27000000000004px;line-height:26.27000000000004px;font-size:16.7px;color:#1a1a1a;-webkit-text-stroke:0.12px #1a1a1a;letter-spacing:0.75px">Caller Name 2</div>
<div class="t" style="left:778px;top:435.77px;height:26.27000000000004px;line-height:26.27000000000004px;font-size:16.7px;color:#1a1a1a;-webkit-text-stroke:0.12px #1a1a1a;letter-spacing:0.5px">xxx-xxx-xxxx</div>
<div style="left:510px;top:460.54px;width:121px;height:26.769999999999982px;background:#11734b"></div>
<div style="left:510px;top:486.81px;width:121px;height:1px;background:rgba(0,0,0,0.12)"></div>
<div class="t" style="left:514.5px;top:462.04px;height:26.269999999999982px;line-height:26.269999999999982px;font-size:16.7px;color:#d4edbc;letter-spacing:1.75px">Incoming</div>
<svg style="position:absolute;left:613.5px;top:471.84000000000003px;" width="9.5" height="5.3" viewBox="0 0 9.5 5.3"><path d="M0 0 H9.5 L4.75 5.3 Z" fill="#d9eedc"/></svg>
<div style="left:631px;top:460.54px;width:143.5px;height:26.769999999999982px;background:#ffcfc9"></div>
<div style="left:631px;top:486.81px;width:143.5px;height:1px;background:rgba(0,0,0,0.06)"></div>
<div class="t" style="left:636.5px;top:462.04px;height:26.269999999999982px;line-height:26.269999999999982px;font-size:16.7px;color:#b10202;letter-spacing:0.4px">No</div>
<svg style="position:absolute;left:756px;top:471.84000000000003px;" width="9.5" height="5.3" viewBox="0 0 9.5 5.3"><path d="M0 0 H9.5 L4.75 5.3 Z" fill="#b10202"/></svg>
<div class="t" style="left:49px;top:462.04px;width:150px;height:26.269999999999982px;line-height:26.269999999999982px;text-align:right;font-size:16.7px;color:#1a1a1a;-webkit-text-stroke:0.12px #1a1a1a;letter-spacing:0.85px">9/1/2024</div>
<div class="t" style="left:203px;top:462.04px;width:124px;height:26.269999999999982px;line-height:26.269999999999982px;text-align:right;font-size:16.7px;color:#1a1a1a;-webkit-text-stroke:0.12px #1a1a1a">11:00 AM</div>
<div class="t" style="left:337px;top:462.04px;height:26.269999999999982px;line-height:26.269999999999982px;font-size:16.7px;color:#1a1a1a;-webkit-text-stroke:0.12px #1a1a1a;letter-spacing:0.75px">Caller Name 3</div>
<div class="t" style="left:778px;top:462.04px;height:26.269999999999982px;line-height:26.269999999999982px;font-size:16.7px;color:#1a1a1a;-webkit-text-stroke:0.12px #1a1a1a;letter-spacing:0.5px">xxx-xxx-xxxx</div>
<div style="left:510px;top:486.81px;width:121px;height:26.77000000000004px;background:#0a53a8"></div>
<div style="left:510px;top:513.08px;width:121px;height:1px;background:rgba(0,0,0,0.12)"></div>
<div class="t" style="left:514.5px;top:488.31px;height:26.27000000000004px;line-height:26.27000000000004px;font-size:16.7px;color:#bfe1f6;letter-spacing:1.75px">Outgoing</div>
<svg style="position:absolute;left:613.5px;top:498.11px;" width="9.5" height="5.3" viewBox="0 0 9.5 5.3"><path d="M0 0 H9.5 L4.75 5.3 Z" fill="#cfe6f8"/></svg>
<div style="left:631px;top:486.81px;width:143.5px;height:26.77000000000004px;background:#ffcfc9"></div>
<div style="left:631px;top:513.08px;width:143.5px;height:1px;background:rgba(0,0,0,0.06)"></div>
<div class="t" style="left:636.5px;top:488.31px;height:26.27000000000004px;line-height:26.27000000000004px;font-size:16.7px;color:#b10202;letter-spacing:0.4px">No</div>
<svg style="position:absolute;left:756px;top:498.11px;" width="9.5" height="5.3" viewBox="0 0 9.5 5.3"><path d="M0 0 H9.5 L4.75 5.3 Z" fill="#b10202"/></svg>
<div class="t" style="left:49px;top:488.31px;width:150px;height:26.27000000000004px;line-height:26.27000000000004px;text-align:right;font-size:16.7px;color:#1a1a1a;-webkit-text-stroke:0.12px #1a1a1a;letter-spacing:0.85px">9/1/2024</div>
<div class="t" style="left:203px;top:488.31px;width:124px;height:26.27000000000004px;line-height:26.27000000000004px;text-align:right;font-size:16.7px;color:#1a1a1a;-webkit-text-stroke:0.12px #1a1a1a">3:00 PM</div>
<div class="t" style="left:337px;top:488.31px;height:26.27000000000004px;line-height:26.27000000000004px;font-size:16.7px;color:#1a1a1a;-webkit-text-stroke:0.12px #1a1a1a;letter-spacing:0.75px">Caller Name 4</div>
<div class="t" style="left:778px;top:488.31px;height:26.27000000000004px;line-height:26.27000000000004px;font-size:16.7px;color:#1a1a1a;-webkit-text-stroke:0.12px #1a1a1a;letter-spacing:0.5px">xxx-xxx-xxxx</div>
<div style="left:510px;top:513.08px;width:121px;height:26.769999999999982px;background:#11734b"></div>
<div style="left:510px;top:539.35px;width:121px;height:1px;background:rgba(0,0,0,0.12)"></div>
<div class="t" style="left:514.5px;top:514.58px;height:26.269999999999982px;line-height:26.269999999999982px;font-size:16.7px;color:#d4edbc;letter-spacing:1.75px">Incoming</div>
<svg style="position:absolute;left:613.5px;top:524.38px;" width="9.5" height="5.3" viewBox="0 0 9.5 5.3"><path d="M0 0 H9.5 L4.75 5.3 Z" fill="#d9eedc"/></svg>
<div style="left:631px;top:513.08px;width:143.5px;height:26.769999999999982px;background:#ffe5a0"></div>
<div style="left:631px;top:539.35px;width:143.5px;height:1px;background:rgba(0,0,0,0.06)"></div>
<div class="t" style="left:636.5px;top:514.58px;height:26.269999999999982px;line-height:26.269999999999982px;font-size:16.7px;color:#473821;letter-spacing:0.4px">Yes</div>
<svg style="position:absolute;left:756px;top:524.38px;" width="9.5" height="5.3" viewBox="0 0 9.5 5.3"><path d="M0 0 H9.5 L4.75 5.3 Z" fill="#9a7a14"/></svg>
<div class="t" style="left:49px;top:514.58px;width:150px;height:26.269999999999982px;line-height:26.269999999999982px;text-align:right;font-size:16.7px;color:#1a1a1a;-webkit-text-stroke:0.12px #1a1a1a;letter-spacing:0.85px">9/2/2024</div>
<div class="t" style="left:203px;top:514.58px;width:124px;height:26.269999999999982px;line-height:26.269999999999982px;text-align:right;font-size:16.7px;color:#1a1a1a;-webkit-text-stroke:0.12px #1a1a1a">9:35 AM</div>
<div class="t" style="left:337px;top:514.58px;height:26.269999999999982px;line-height:26.269999999999982px;font-size:16.7px;color:#1a1a1a;-webkit-text-stroke:0.12px #1a1a1a;letter-spacing:0.75px">Caller Name 5</div>
<div class="t" style="left:778px;top:514.58px;height:26.269999999999982px;line-height:26.269999999999982px;font-size:16.7px;color:#1a1a1a;-webkit-text-stroke:0.12px #1a1a1a;letter-spacing:0.5px">xxx-xxx-xxxx</div>
<div style="left:510px;top:539.35px;width:121px;height:26.769999999999982px;background:#11734b"></div>
<div style="left:510px;top:565.62px;width:121px;height:1px;background:rgba(0,0,0,0.12)"></div>
<div class="t" style="left:514.5px;top:540.85px;height:26.269999999999982px;line-height:26.269999999999982px;font-size:16.7px;color:#d4edbc;letter-spacing:1.75px">Incoming</div>
<svg style="position:absolute;left:613.5px;top:550.65px;" width="9.5" height="5.3" viewBox="0 0 9.5 5.3"><path d="M0 0 H9.5 L4.75 5.3 Z" fill="#d9eedc"/></svg>
<div style="left:631px;top:539.35px;width:143.5px;height:26.769999999999982px;background:#ffe5a0"></div>
<div style="left:631px;top:565.62px;width:143.5px;height:1px;background:rgba(0,0,0,0.06)"></div>
<div class="t" style="left:636.5px;top:540.85px;height:26.269999999999982px;line-height:26.269999999999982px;font-size:16.7px;color:#473821;letter-spacing:0.4px">Yes</div>
<svg style="position:absolute;left:756px;top:550.65px;" width="9.5" height="5.3" viewBox="0 0 9.5 5.3"><path d="M0 0 H9.5 L4.75 5.3 Z" fill="#9a7a14"/></svg>
<div class="t" style="left:49px;top:540.85px;width:150px;height:26.269999999999982px;line-height:26.269999999999982px;text-align:right;font-size:16.7px;color:#1a1a1a;-webkit-text-stroke:0.12px #1a1a1a;letter-spacing:0.85px">9/2/2024</div>
<div class="t" style="left:203px;top:540.85px;width:124px;height:26.269999999999982px;line-height:26.269999999999982px;text-align:right;font-size:16.7px;color:#1a1a1a;-webkit-text-stroke:0.12px #1a1a1a">11:25 AM</div>
<div class="t" style="left:337px;top:540.85px;height:26.269999999999982px;line-height:26.269999999999982px;font-size:16.7px;color:#1a1a1a;-webkit-text-stroke:0.12px #1a1a1a;letter-spacing:0.75px">Caller Name 6</div>
<div class="t" style="left:778px;top:540.85px;height:26.269999999999982px;line-height:26.269999999999982px;font-size:16.7px;color:#1a1a1a;-webkit-text-stroke:0.12px #1a1a1a;letter-spacing:0.5px">xxx-xxx-xxxx</div>
<div style="left:510px;top:565.62px;width:121px;height:26.769999999999982px;background:#11734b"></div>
<div style="left:510px;top:591.89px;width:121px;height:1px;background:rgba(0,0,0,0.12)"></div>
<div class="t" style="left:514.5px;top:567.12px;height:26.269999999999982px;line-height:26.269999999999982px;font-size:16.7px;color:#d4edbc;letter-spacing:1.75px">Incoming</div>
<svg style="position:absolute;left:613.5px;top:576.92px;" width="9.5" height="5.3" viewBox="0 0 9.5 5.3"><path d="M0 0 H9.5 L4.75 5.3 Z" fill="#d9eedc"/></svg>
<div style="left:631px;top:565.62px;width:143.5px;height:26.769999999999982px;background:#ffe5a0"></div>
<div style="left:631px;top:591.89px;width:143.5px;height:1px;background:rgba(0,0,0,0.06)"></div>
<div class="t" style="left:636.5px;top:567.12px;height:26.269999999999982px;line-height:26.269999999999982px;font-size:16.7px;color:#473821;letter-spacing:0.4px">Yes</div>
<svg style="position:absolute;left:756px;top:576.92px;" width="9.5" height="5.3" viewBox="0 0 9.5 5.3"><path d="M0 0 H9.5 L4.75 5.3 Z" fill="#9a7a14"/></svg>
<div class="t" style="left:49px;top:567.12px;width:150px;height:26.269999999999982px;line-height:26.269999999999982px;text-align:right;font-size:16.7px;color:#1a1a1a;-webkit-text-stroke:0.12px #1a1a1a;letter-spacing:0.85px">9/2/2024</div>
<div class="t" style="left:203px;top:567.12px;width:124px;height:26.269999999999982px;line-height:26.269999999999982px;text-align:right;font-size:16.7px;color:#1a1a1a;-webkit-text-stroke:0.12px #1a1a1a">5:00 PM</div>
<div class="t" style="left:337px;top:567.12px;height:26.269999999999982px;line-height:26.269999999999982px;font-size:16.7px;color:#1a1a1a;-webkit-text-stroke:0.12px #1a1a1a;letter-spacing:0.75px">Caller Name 2</div>
<div class="t" style="left:778px;top:567.12px;height:26.269999999999982px;line-height:26.269999999999982px;font-size:16.7px;color:#1a1a1a;-webkit-text-stroke:0.12px #1a1a1a;letter-spacing:0.5px">xxx-xxx-xxxx</div>
<div style="left:510px;top:591.89px;width:121px;height:26.769999999999982px;background:#11734b"></div>
<div style="left:510px;top:618.16px;width:121px;height:1px;background:rgba(0,0,0,0.12)"></div>
<div class="t" style="left:514.5px;top:593.39px;height:26.269999999999982px;line-height:26.269999999999982px;font-size:16.7px;color:#d4edbc;letter-spacing:1.75px">Incoming</div>
<svg style="position:absolute;left:613.5px;top:603.1899999999999px;" width="9.5" height="5.3" viewBox="0 0 9.5 5.3"><path d="M0 0 H9.5 L4.75 5.3 Z" fill="#d9eedc"/></svg>
<div style="left:631px;top:591.89px;width:143.5px;height:26.769999999999982px;background:#ffe5a0"></div>
<div style="left:631px;top:618.16px;width:143.5px;height:1px;background:rgba(0,0,0,0.06)"></div>
<div class="t" style="left:636.5px;top:593.39px;height:26.269999999999982px;line-height:26.269999999999982px;font-size:16.7px;color:#473821;letter-spacing:0.4px">Yes</div>
<svg style="position:absolute;left:756px;top:603.1899999999999px;" width="9.5" height="5.3" viewBox="0 0 9.5 5.3"><path d="M0 0 H9.5 L4.75 5.3 Z" fill="#9a7a14"/></svg>
<div class="t" style="left:49px;top:593.39px;width:150px;height:26.269999999999982px;line-height:26.269999999999982px;text-align:right;font-size:16.7px;color:#1a1a1a;-webkit-text-stroke:0.12px #1a1a1a;letter-spacing:0.85px">9/3/2024</div>
<div class="t" style="left:203px;top:593.39px;width:124px;height:26.269999999999982px;line-height:26.269999999999982px;text-align:right;font-size:16.7px;color:#1a1a1a;-webkit-text-stroke:0.12px #1a1a1a">11:15 AM</div>
<div class="t" style="left:337px;top:593.39px;height:26.269999999999982px;line-height:26.269999999999982px;font-size:16.7px;color:#1a1a1a;-webkit-text-stroke:0.12px #1a1a1a;letter-spacing:0.75px">Caller Name 3</div>
<div class="t" style="left:778px;top:593.39px;height:26.269999999999982px;line-height:26.269999999999982px;font-size:16.7px;color:#1a1a1a;-webkit-text-stroke:0.12px #1a1a1a;letter-spacing:0.5px">xxx-xxx-xxxx</div>
<div style="left:510px;top:618.16px;width:121px;height:26.770000000000095px;background:#11734b"></div>
<div style="left:510px;top:644.4300000000001px;width:121px;height:1px;background:rgba(0,0,0,0.12)"></div>
<div class="t" style="left:514.5px;top:619.66px;height:26.270000000000095px;line-height:26.270000000000095px;font-size:16.7px;color:#d4edbc;letter-spacing:1.75px">Incoming</div>
<svg style="position:absolute;left:613.5px;top:629.4599999999999px;" width="9.5" height="5.3" viewBox="0 0 9.5 5.3"><path d="M0 0 H9.5 L4.75 5.3 Z" fill="#d9eedc"/></svg>
<div style="left:631px;top:618.16px;width:143.5px;height:26.770000000000095px;background:#ffcfc9"></div>
<div style="left:631px;top:644.4300000000001px;width:143.5px;height:1px;background:rgba(0,0,0,0.06)"></div>
<div class="t" style="left:636.5px;top:619.66px;height:26.270000000000095px;line-height:26.270000000000095px;font-size:16.7px;color:#b10202;letter-spacing:0.4px">No</div>
<svg style="position:absolute;left:756px;top:629.4599999999999px;" width="9.5" height="5.3" viewBox="0 0 9.5 5.3"><path d="M0 0 H9.5 L4.75 5.3 Z" fill="#b10202"/></svg>
<div class="t" style="left:49px;top:619.66px;width:150px;height:26.270000000000095px;line-height:26.270000000000095px;text-align:right;font-size:16.7px;color:#1a1a1a;-webkit-text-stroke:0.12px #1a1a1a;letter-spacing:0.85px">9/3/2024</div>
<div class="t" style="left:203px;top:619.66px;width:124px;height:26.270000000000095px;line-height:26.270000000000095px;text-align:right;font-size:16.7px;color:#1a1a1a;-webkit-text-stroke:0.12px #1a1a1a">6:15 PM</div>
<div class="t" style="left:337px;top:619.66px;height:26.270000000000095px;line-height:26.270000000000095px;font-size:16.7px;color:#1a1a1a;-webkit-text-stroke:0.12px #1a1a1a;letter-spacing:0.75px">Caller Name 4</div>
<div class="t" style="left:778px;top:619.66px;height:26.270000000000095px;line-height:26.270000000000095px;font-size:16.7px;color:#1a1a1a;-webkit-text-stroke:0.12px #1a1a1a;letter-spacing:0.5px">xxx-xxx-xxxx</div>
<div style="left:510px;top:644.4300000000001px;width:121px;height:26.769999999999982px;background:#11734b"></div>
<div style="left:510px;top:670.7px;width:121px;height:1px;background:rgba(0,0,0,0.12)"></div>
<div class="t" style="left:514.5px;top:645.9300000000001px;height:26.269999999999982px;line-height:26.269999999999982px;font-size:16.7px;color:#d4edbc;letter-spacing:1.75px">Incoming</div>
<svg style="position:absolute;left:613.5px;top:655.73px;" width="9.5" height="5.3" viewBox="0 0 9.5 5.3"><path d="M0 0 H9.5 L4.75 5.3 Z" fill="#d9eedc"/></svg>
<div style="left:631px;top:644.4300000000001px;width:143.5px;height:26.769999999999982px;background:#ffcfc9"></div>
<div style="left:631px;top:670.7px;width:143.5px;height:1px;background:rgba(0,0,0,0.06)"></div>
<div class="t" style="left:636.5px;top:645.9300000000001px;height:26.269999999999982px;line-height:26.269999999999982px;font-size:16.7px;color:#b10202;letter-spacing:0.4px">No</div>
<svg style="position:absolute;left:756px;top:655.73px;" width="9.5" height="5.3" viewBox="0 0 9.5 5.3"><path d="M0 0 H9.5 L4.75 5.3 Z" fill="#b10202"/></svg>
<div class="t" style="left:49px;top:645.9300000000001px;width:150px;height:26.269999999999982px;line-height:26.269999999999982px;text-align:right;font-size:16.7px;color:#1a1a1a;-webkit-text-stroke:0.12px #1a1a1a;letter-spacing:0.85px">9/4/2024</div>
<div class="t" style="left:203px;top:645.9300000000001px;width:124px;height:26.269999999999982px;line-height:26.269999999999982px;text-align:right;font-size:16.7px;color:#1a1a1a;-webkit-text-stroke:0.12px #1a1a1a">8:00 AM</div>
<div class="t" style="left:337px;top:645.9300000000001px;height:26.269999999999982px;line-height:26.269999999999982px;font-size:16.7px;color:#1a1a1a;-webkit-text-stroke:0.12px #1a1a1a;letter-spacing:0.75px">Caller Name 5</div>
<div class="t" style="left:778px;top:645.9300000000001px;height:26.269999999999982px;line-height:26.269999999999982px;font-size:16.7px;color:#1a1a1a;-webkit-text-stroke:0.12px #1a1a1a;letter-spacing:0.5px">xxx-xxx-xxxx</div>
<div style="left:510px;top:670.7px;width:121px;height:26.769999999999982px;background:#11734b"></div>
<div style="left:510px;top:696.97px;width:121px;height:1px;background:rgba(0,0,0,0.12)"></div>
<div class="t" style="left:514.5px;top:672.2px;height:26.269999999999982px;line-height:26.269999999999982px;font-size:16.7px;color:#d4edbc;letter-spacing:1.75px">Incoming</div>
<svg style="position:absolute;left:613.5px;top:682.0px;" width="9.5" height="5.3" viewBox="0 0 9.5 5.3"><path d="M0 0 H9.5 L4.75 5.3 Z" fill="#d9eedc"/></svg>
<div style="left:631px;top:670.7px;width:143.5px;height:26.769999999999982px;background:#ffe5a0"></div>
<div style="left:631px;top:696.97px;width:143.5px;height:1px;background:rgba(0,0,0,0.06)"></div>
<div class="t" style="left:636.5px;top:672.2px;height:26.269999999999982px;line-height:26.269999999999982px;font-size:16.7px;color:#473821;letter-spacing:0.4px">Yes</div>
<svg style="position:absolute;left:756px;top:682.0px;" width="9.5" height="5.3" viewBox="0 0 9.5 5.3"><path d="M0 0 H9.5 L4.75 5.3 Z" fill="#9a7a14"/></svg>
<div class="t" style="left:49px;top:672.2px;width:150px;height:26.269999999999982px;line-height:26.269999999999982px;text-align:right;font-size:16.7px;color:#1a1a1a;-webkit-text-stroke:0.12px #1a1a1a;letter-spacing:0.85px">9/4/2024</div>
<div class="t" style="left:203px;top:672.2px;width:124px;height:26.269999999999982px;line-height:26.269999999999982px;text-align:right;font-size:16.7px;color:#1a1a1a;-webkit-text-stroke:0.12px #1a1a1a">9:15 AM</div>
<div class="t" style="left:337px;top:672.2px;height:26.269999999999982px;line-height:26.269999999999982px;font-size:16.7px;color:#1a1a1a;-webkit-text-stroke:0.12px #1a1a1a;letter-spacing:0.75px">Caller Name 6</div>
<div class="t" style="left:778px;top:672.2px;height:26.269999999999982px;line-height:26.269999999999982px;font-size:16.7px;color:#1a1a1a;-webkit-text-stroke:0.12px #1a1a1a;letter-spacing:0.5px">xxx-xxx-xxxx</div>
<div style="left:510px;top:696.97px;width:121px;height:26.769999999999982px;background:#11734b"></div>
<div style="left:510px;top:723.24px;width:121px;height:1px;background:rgba(0,0,0,0.12)"></div>
<div class="t" style="left:514.5px;top:698.47px;height:26.269999999999982px;line-height:26.269999999999982px;font-size:16.7px;color:#d4edbc;letter-spacing:1.75px">Incoming</div>
<svg style="position:absolute;left:613.5px;top:708.27px;" width="9.5" height="5.3" viewBox="0 0 9.5 5.3"><path d="M0 0 H9.5 L4.75 5.3 Z" fill="#d9eedc"/></svg>
<div style="left:631px;top:696.97px;width:143.5px;height:26.769999999999982px;background:#ffcfc9"></div>
<div style="left:631px;top:723.24px;width:143.5px;height:1px;background:rgba(0,0,0,0.06)"></div>
<div class="t" style="left:636.5px;top:698.47px;height:26.269999999999982px;line-height:26.269999999999982px;font-size:16.7px;color:#b10202;letter-spacing:0.4px">No</div>
<svg style="position:absolute;left:756px;top:708.27px;" width="9.5" height="5.3" viewBox="0 0 9.5 5.3"><path d="M0 0 H9.5 L4.75 5.3 Z" fill="#b10202"/></svg>
<div class="t" style="left:49px;top:698.47px;width:150px;height:26.269999999999982px;line-height:26.269999999999982px;text-align:right;font-size:16.7px;color:#1a1a1a;-webkit-text-stroke:0.12px #1a1a1a;letter-spacing:0.85px">9/4/2024</div>
<div class="t" style="left:203px;top:698.47px;width:124px;height:26.269999999999982px;line-height:26.269999999999982px;text-align:right;font-size:16.7px;color:#1a1a1a;-webkit-text-stroke:0.12px #1a1a1a">4:00 PM</div>
<div class="t" style="left:337px;top:698.47px;height:26.269999999999982px;line-height:26.269999999999982px;font-size:16.7px;color:#1a1a1a;-webkit-text-stroke:0.12px #1a1a1a;letter-spacing:0.75px">Caller Name 3</div>
<div class="t" style="left:778px;top:698.47px;height:26.269999999999982px;line-height:26.269999999999982px;font-size:16.7px;color:#1a1a1a;-webkit-text-stroke:0.12px #1a1a1a;letter-spacing:0.5px">xxx-xxx-xxxx</div>
<div style="left:510px;top:723.24px;width:121px;height:26.769999999999982px;background:#11734b"></div>
<div style="left:510px;top:749.51px;width:121px;height:1px;background:rgba(0,0,0,0.12)"></div>
<div class="t" style="left:514.5px;top:724.74px;height:26.269999999999982px;line-height:26.269999999999982px;font-size:16.7px;color:#d4edbc;letter-spacing:1.75px">Incoming</div>
<svg style="position:absolute;left:613.5px;top:734.54px;" width="9.5" height="5.3" viewBox="0 0 9.5 5.3"><path d="M0 0 H9.5 L4.75 5.3 Z" fill="#d9eedc"/></svg>
<div style="left:631px;top:723.24px;width:143.5px;height:26.769999999999982px;background:#ffcfc9"></div>
<div style="left:631px;top:749.51px;width:143.5px;height:1px;background:rgba(0,0,0,0.06)"></div>
<div class="t" style="left:636.5px;top:724.74px;height:26.269999999999982px;line-height:26.269999999999982px;font-size:16.7px;color:#b10202;letter-spacing:0.4px">No</div>
<svg style="position:absolute;left:756px;top:734.54px;" width="9.5" height="5.3" viewBox="0 0 9.5 5.3"><path d="M0 0 H9.5 L4.75 5.3 Z" fill="#b10202"/></svg>
<div class="t" style="left:49px;top:724.74px;width:150px;height:26.269999999999982px;line-height:26.269999999999982px;text-align:right;font-size:16.7px;color:#1a1a1a;-webkit-text-stroke:0.12px #1a1a1a;letter-spacing:0.85px">9/5/2024</div>
<div class="t" style="left:203px;top:724.74px;width:124px;height:26.269999999999982px;line-height:26.269999999999982px;text-align:right;font-size:16.7px;color:#1a1a1a;-webkit-text-stroke:0.12px #1a1a1a">9:30 AM</div>
<div class="t" style="left:337px;top:724.74px;height:26.269999999999982px;line-height:26.269999999999982px;font-size:16.7px;color:#1a1a1a;-webkit-text-stroke:0.12px #1a1a1a;letter-spacing:0.75px">Caller Name 4</div>
<div class="t" style="left:778px;top:724.74px;height:26.269999999999982px;line-height:26.269999999999982px;font-size:16.7px;color:#1a1a1a;-webkit-text-stroke:0.12px #1a1a1a;letter-spacing:0.5px">xxx-xxx-xxxx</div>
<div style="left:510px;top:749.51px;width:121px;height:26.769999999999982px;background:#0a53a8"></div>
<div style="left:510px;top:775.78px;width:121px;height:1px;background:rgba(0,0,0,0.12)"></div>
<div class="t" style="left:514.5px;top:751.01px;height:26.269999999999982px;line-height:26.269999999999982px;font-size:16.7px;color:#bfe1f6;letter-spacing:1.75px">Outgoing</div>
<svg style="position:absolute;left:613.5px;top:760.81px;" width="9.5" height="5.3" viewBox="0 0 9.5 5.3"><path d="M0 0 H9.5 L4.75 5.3 Z" fill="#cfe6f8"/></svg>
<div style="left:631px;top:749.51px;width:143.5px;height:26.769999999999982px;background:#ffe5a0"></div>
<div style="left:631px;top:775.78px;width:143.5px;height:1px;background:rgba(0,0,0,0.06)"></div>
<div class="t" style="left:636.5px;top:751.01px;height:26.269999999999982px;line-height:26.269999999999982px;font-size:16.7px;color:#473821;letter-spacing:0.4px">Yes</div>
<svg style="position:absolute;left:756px;top:760.81px;" width="9.5" height="5.3" viewBox="0 0 9.5 5.3"><path d="M0 0 H9.5 L4.75 5.3 Z" fill="#9a7a14"/></svg>
<div class="t" style="left:49px;top:751.01px;width:150px;height:26.269999999999982px;line-height:26.269999999999982px;text-align:right;font-size:16.7px;color:#1a1a1a;-webkit-text-stroke:0.12px #1a1a1a;letter-spacing:0.85px">9/5/2024</div>
<div class="t" style="left:203px;top:751.01px;width:124px;height:26.269999999999982px;line-height:26.269999999999982px;text-align:right;font-size:16.7px;color:#1a1a1a;-webkit-text-stroke:0.12px #1a1a1a">10:15 AM</div>
<div class="t" style="left:337px;top:751.01px;height:26.269999999999982px;line-height:26.269999999999982px;font-size:16.7px;color:#1a1a1a;-webkit-text-stroke:0.12px #1a1a1a;letter-spacing:0.75px">Caller Name 5</div>
<div class="t" style="left:778px;top:751.01px;height:26.269999999999982px;line-height:26.269999999999982px;font-size:16.7px;color:#1a1a1a;-webkit-text-stroke:0.12px #1a1a1a;letter-spacing:0.5px">xxx-xxx-xxxx</div>
<div style="left:510px;top:775.78px;width:121px;height:26.769999999999982px;background:#11734b"></div>
<div style="left:510px;top:802.05px;width:121px;height:1px;background:rgba(0,0,0,0.12)"></div>
<div class="t" style="left:514.5px;top:777.28px;height:26.269999999999982px;line-height:26.269999999999982px;font-size:16.7px;color:#d4edbc;letter-spacing:1.75px">Incoming</div>
<svg style="position:absolute;left:613.5px;top:787.0799999999999px;" width="9.5" height="5.3" viewBox="0 0 9.5 5.3"><path d="M0 0 H9.5 L4.75 5.3 Z" fill="#d9eedc"/></svg>
<div style="left:631px;top:775.78px;width:143.5px;height:26.769999999999982px;background:#ffe5a0"></div>
<div style="left:631px;top:802.05px;width:143.5px;height:1px;background:rgba(0,0,0,0.06)"></div>
<div class="t" style="left:636.5px;top:777.28px;height:26.269999999999982px;line-height:26.269999999999982px;font-size:16.7px;color:#473821;letter-spacing:0.4px">Yes</div>
<svg style="position:absolute;left:756px;top:787.0799999999999px;" width="9.5" height="5.3" viewBox="0 0 9.5 5.3"><path d="M0 0 H9.5 L4.75 5.3 Z" fill="#9a7a14"/></svg>
<div class="t" style="left:49px;top:777.28px;width:150px;height:26.269999999999982px;line-height:26.269999999999982px;text-align:right;font-size:16.7px;color:#1a1a1a;-webkit-text-stroke:0.12px #1a1a1a;letter-spacing:0.85px">9/5/2024</div>
<div class="t" style="left:203px;top:777.28px;width:124px;height:26.269999999999982px;line-height:26.269999999999982px;text-align:right;font-size:16.7px;color:#1a1a1a;-webkit-text-stroke:0.12px #1a1a1a">12:10 PM</div>
<div class="t" style="left:337px;top:777.28px;height:26.269999999999982px;line-height:26.269999999999982px;font-size:16.7px;color:#1a1a1a;-webkit-text-stroke:0.12px #1a1a1a;letter-spacing:0.75px">Caller Name 6</div>
<div class="t" style="left:778px;top:777.28px;height:26.269999999999982px;line-height:26.269999999999982px;font-size:16.7px;color:#1a1a1a;-webkit-text-stroke:0.12px #1a1a1a;letter-spacing:0.5px">xxx-xxx-xxxx</div>
<div style="left:510px;top:802.05px;width:121px;height:26.769999999999982px;background:#11734b"></div>
<div style="left:510px;top:828.3199999999999px;width:121px;height:1px;background:rgba(0,0,0,0.12)"></div>
<div class="t" style="left:514.5px;top:803.55px;height:26.269999999999982px;line-height:26.269999999999982px;font-size:16.7px;color:#d4edbc;letter-spacing:1.75px">Incoming</div>
<svg style="position:absolute;left:613.5px;top:813.3499999999999px;" width="9.5" height="5.3" viewBox="0 0 9.5 5.3"><path d="M0 0 H9.5 L4.75 5.3 Z" fill="#d9eedc"/></svg>
<div style="left:631px;top:802.05px;width:143.5px;height:26.769999999999982px;background:#ffe5a0"></div>
<div style="left:631px;top:828.3199999999999px;width:143.5px;height:1px;background:rgba(0,0,0,0.06)"></div>
<div class="t" style="left:636.5px;top:803.55px;height:26.269999999999982px;line-height:26.269999999999982px;font-size:16.7px;color:#473821;letter-spacing:0.4px">Yes</div>
<svg style="position:absolute;left:756px;top:813.3499999999999px;" width="9.5" height="5.3" viewBox="0 0 9.5 5.3"><path d="M0 0 H9.5 L4.75 5.3 Z" fill="#9a7a14"/></svg>
<div class="t" style="left:49px;top:803.55px;width:150px;height:26.269999999999982px;line-height:26.269999999999982px;text-align:right;font-size:16.7px;color:#1a1a1a;-webkit-text-stroke:0.12px #1a1a1a;letter-spacing:0.85px">9/5/2024</div>
<div class="t" style="left:203px;top:803.55px;width:124px;height:26.269999999999982px;line-height:26.269999999999982px;text-align:right;font-size:16.7px;color:#1a1a1a;-webkit-text-stroke:0.12px #1a1a1a">2:30 PM</div>
<div class="t" style="left:337px;top:803.55px;height:26.269999999999982px;line-height:26.269999999999982px;font-size:16.7px;color:#1a1a1a;-webkit-text-stroke:0.12px #1a1a1a;letter-spacing:0.75px">Caller Name 2</div>
<div class="t" style="left:778px;top:803.55px;height:26.269999999999982px;line-height:26.269999999999982px;font-size:16.7px;color:#1a1a1a;-webkit-text-stroke:0.12px #1a1a1a;letter-spacing:0.5px">xxx-xxx-xxxx</div>
<div style="left:510px;top:828.3199999999999px;width:121px;height:26.769999999999982px;background:#11734b"></div>
<div style="left:510px;top:854.5899999999999px;width:121px;height:1px;background:rgba(0,0,0,0.12)"></div>
<div class="t" style="left:514.5px;top:829.8199999999999px;height:26.269999999999982px;line-height:26.269999999999982px;font-size:16.7px;color:#d4edbc;letter-spacing:1.75px">Incoming</div>
<svg style="position:absolute;left:613.5px;top:839.6199999999999px;" width="9.5" height="5.3" viewBox="0 0 9.5 5.3"><path d="M0 0 H9.5 L4.75 5.3 Z" fill="#d9eedc"/></svg>
<div style="left:631px;top:828.3199999999999px;width:143.5px;height:26.769999999999982px;background:#ffe5a0"></div>
<div style="left:631px;top:854.5899999999999px;width:143.5px;height:1px;background:rgba(0,0,0,0.06)"></div>
<div class="t" style="left:636.5px;top:829.8199999999999px;height:26.269999999999982px;line-height:26.269999999999982px;font-size:16.7px;color:#473821;letter-spacing:0.4px">Yes</div>
<svg style="position:absolute;left:756px;top:839.6199999999999px;" width="9.5" height="5.3" viewBox="0 0 9.5 5.3"><path d="M0 0 H9.5 L4.75 5.3 Z" fill="#9a7a14"/></svg>
<div class="t" style="left:49px;top:829.8199999999999px;width:150px;height:26.269999999999982px;line-height:26.269999999999982px;text-align:right;font-size:16.7px;color:#1a1a1a;-webkit-text-stroke:0.12px #1a1a1a;letter-spacing:0.85px">9/5/2024</div>
<div class="t" style="left:203px;top:829.8199999999999px;width:124px;height:26.269999999999982px;line-height:26.269999999999982px;text-align:right;font-size:16.7px;color:#1a1a1a;-webkit-text-stroke:0.12px #1a1a1a">3:00 PM</div>
<div class="t" style="left:337px;top:829.8199999999999px;height:26.269999999999982px;line-height:26.269999999999982px;font-size:16.7px;color:#1a1a1a;-webkit-text-stroke:0.12px #1a1a1a;letter-spacing:0.75px">Caller Name 5</div>
<div class="t" style="left:778px;top:829.8199999999999px;height:26.269999999999982px;line-height:26.269999999999982px;font-size:16.7px;color:#1a1a1a;-webkit-text-stroke:0.12px #1a1a1a;letter-spacing:0.5px">xxx-xxx-xxxx</div>
<div style="left:510px;top:854.5899999999999px;width:121px;height:26.770000000000095px;background:#11734b"></div>
<div style="left:510px;top:880.86px;width:121px;height:1px;background:rgba(0,0,0,0.12)"></div>
<div class="t" style="left:514.5px;top:856.0899999999999px;height:26.270000000000095px;line-height:26.270000000000095px;font-size:16.7px;color:#d4edbc;letter-spacing:1.75px">Incoming</div>
<svg style="position:absolute;left:613.5px;top:865.8899999999999px;" width="9.5" height="5.3" viewBox="0 0 9.5 5.3"><path d="M0 0 H9.5 L4.75 5.3 Z" fill="#d9eedc"/></svg>
<div style="left:631px;top:854.5899999999999px;width:143.5px;height:26.770000000000095px;background:#ffcfc9"></div>
<div style="left:631px;top:880.86px;width:143.5px;height:1px;background:rgba(0,0,0,0.06)"></div>
<div class="t" style="left:636.5px;top:856.0899999999999px;height:26.270000000000095px;line-height:26.270000000000095px;font-size:16.7px;color:#b10202;letter-spacing:0.4px">No</div>
<svg style="position:absolute;left:756px;top:865.8899999999999px;" width="9.5" height="5.3" viewBox="0 0 9.5 5.3"><path d="M0 0 H9.5 L4.75 5.3 Z" fill="#b10202"/></svg>
<div class="t" style="left:49px;top:856.0899999999999px;width:150px;height:26.270000000000095px;line-height:26.270000000000095px;text-align:right;font-size:16.7px;color:#1a1a1a;-webkit-text-stroke:0.12px #1a1a1a;letter-spacing:0.85px">9/6/2024</div>
<div class="t" style="left:203px;top:856.0899999999999px;width:124px;height:26.270000000000095px;line-height:26.270000000000095px;text-align:right;font-size:16.7px;color:#1a1a1a;-webkit-text-stroke:0.12px #1a1a1a">8:00 AM</div>
<div class="t" style="left:337px;top:856.0899999999999px;height:26.270000000000095px;line-height:26.270000000000095px;font-size:16.7px;color:#1a1a1a;-webkit-text-stroke:0.12px #1a1a1a;letter-spacing:0.75px">Caller Name 6</div>
<div class="t" style="left:778px;top:856.0899999999999px;height:26.270000000000095px;line-height:26.270000000000095px;font-size:16.7px;color:#1a1a1a;-webkit-text-stroke:0.12px #1a1a1a;letter-spacing:0.5px">xxx-xxx-xxxx</div>
<div style="left:510px;top:880.86px;width:121px;height:26.769999999999982px;background:#11734b"></div>
<div style="left:510px;top:907.13px;width:121px;height:1px;background:rgba(0,0,0,0.12)"></div>
<div class="t" style="left:514.5px;top:882.36px;height:26.269999999999982px;line-height:26.269999999999982px;font-size:16.7px;color:#d4edbc;letter-spacing:1.75px">Incoming</div>
<svg style="position:absolute;left:613.5px;top:892.16px;" width="9.5" height="5.3" viewBox="0 0 9.5 5.3"><path d="M0 0 H9.5 L4.75 5.3 Z" fill="#d9eedc"/></svg>
<div style="left:631px;top:880.86px;width:143.5px;height:26.769999999999982px;background:#ffcfc9"></div>
<div style="left:631px;top:907.13px;width:143.5px;height:1px;background:rgba(0,0,0,0.06)"></div>
<div class="t" style="left:636.5px;top:882.36px;height:26.269999999999982px;line-height:26.269999999999982px;font-size:16.7px;color:#b10202;letter-spacing:0.4px">No</div>
<svg style="position:absolute;left:756px;top:892.16px;" width="9.5" height="5.3" viewBox="0 0 9.5 5.3"><path d="M0 0 H9.5 L4.75 5.3 Z" fill="#b10202"/></svg>
<div class="t" style="left:49px;top:882.36px;width:150px;height:26.269999999999982px;line-height:26.269999999999982px;text-align:right;font-size:16.7px;color:#1a1a1a;-webkit-text-stroke:0.12px #1a1a1a;letter-spacing:0.85px">9/6/2024</div>
<div class="t" style="left:203px;top:882.36px;width:124px;height:26.269999999999982px;line-height:26.269999999999982px;text-align:right;font-size:16.7px;color:#1a1a1a;-webkit-text-stroke:0.12px #1a1a1a">10:30 AM</div>
<div class="t" style="left:337px;top:882.36px;height:26.269999999999982px;line-height:26.269999999999982px;font-size:16.7px;color:#1a1a1a;-webkit-text-stroke:0.12px #1a1a1a;letter-spacing:0.75px">Caller Name 2</div>
<div class="t" style="left:778px;top:882.36px;height:26.269999999999982px;line-height:26.269999999999982px;font-size:16.7px;color:#1a1a1a;-webkit-text-stroke:0.12px #1a1a1a;letter-spacing:0.5px">xxx-xxx-xxxx</div>
<div style="left:510px;top:907.13px;width:121px;height:26.769999999999982px;background:#11734b"></div>
<div style="left:510px;top:933.4px;width:121px;height:1px;background:rgba(0,0,0,0.12)"></div>
<div class="t" style="left:514.5px;top:908.63px;height:26.269999999999982px;line-height:26.269999999999982px;font-size:16.7px;color:#d4edbc;letter-spacing:1.75px">Incoming</div>
<svg style="position:absolute;left:613.5px;top:918.43px;" width="9.5" height="5.3" viewBox="0 0 9.5 5.3"><path d="M0 0 H9.5 L4.75 5.3 Z" fill="#d9eedc"/></svg>
<div style="left:631px;top:907.13px;width:143.5px;height:26.769999999999982px;background:#ffe5a0"></div>
<div style="left:631px;top:933.4px;width:143.5px;height:1px;background:rgba(0,0,0,0.06)"></div>
<div class="t" style="left:636.5px;top:908.63px;height:26.269999999999982px;line-height:26.269999999999982px;font-size:16.7px;color:#473821;letter-spacing:0.4px">Yes</div>
<svg style="position:absolute;left:756px;top:918.43px;" width="9.5" height="5.3" viewBox="0 0 9.5 5.3"><path d="M0 0 H9.5 L4.75 5.3 Z" fill="#9a7a14"/></svg>
<div class="t" style="left:49px;top:908.63px;width:150px;height:26.269999999999982px;line-height:26.269999999999982px;text-align:right;font-size:16.7px;color:#1a1a1a;-webkit-text-stroke:0.12px #1a1a1a;letter-spacing:0.85px">9/6/2024</div>
<div class="t" style="left:203px;top:908.63px;width:124px;height:26.269999999999982px;line-height:26.269999999999982px;text-align:right;font-size:16.7px;color:#1a1a1a;-webkit-text-stroke:0.12px #1a1a1a">11:00 AM</div>
<div class="t" style="left:337px;top:908.63px;height:26.269999999999982px;line-height:26.269999999999982px;font-size:16.7px;color:#1a1a1a;-webkit-text-stroke:0.12px #1a1a1a;letter-spacing:0.75px">Caller Name 3</div>
<div class="t" style="left:778px;top:908.63px;height:26.269999999999982px;line-height:26.269999999999982px;font-size:16.7px;color:#1a1a1a;-webkit-text-stroke:0.12px #1a1a1a;letter-spacing:0.5px">xxx-xxx-xxxx</div>
<div style="left:510px;top:933.4px;width:121px;height:26.769999999999982px;background:#11734b"></div>
<div style="left:510px;top:959.67px;width:121px;height:1px;background:rgba(0,0,0,0.12)"></div>
<div class="t" style="left:514.5px;top:934.9px;height:26.269999999999982px;line-height:26.269999999999982px;font-size:16.7px;color:#d4edbc;letter-spacing:1.75px">Incoming</div>
<svg style="position:absolute;left:613.5px;top:944.6999999999999px;" width="9.5" height="5.3" viewBox="0 0 9.5 5.3"><path d="M0 0 H9.5 L4.75 5.3 Z" fill="#d9eedc"/></svg>
<div style="left:631px;top:933.4px;width:143.5px;height:26.769999999999982px;background:#ffcfc9"></div>
<div style="left:631px;top:959.67px;width:143.5px;height:1px;background:rgba(0,0,0,0.06)"></div>
<div class="t" style="left:636.5px;top:934.9px;height:26.269999999999982px;line-height:26.269999999999982px;font-size:16.7px;color:#b10202;letter-spacing:0.4px">No</div>
<svg style="position:absolute;left:756px;top:944.6999999999999px;" width="9.5" height="5.3" viewBox="0 0 9.5 5.3"><path d="M0 0 H9.5 L4.75 5.3 Z" fill="#b10202"/></svg>
<div class="t" style="left:49px;top:934.9px;width:150px;height:26.269999999999982px;line-height:26.269999999999982px;text-align:right;font-size:16.7px;color:#1a1a1a;-webkit-text-stroke:0.12px #1a1a1a;letter-spacing:0.85px">9/7/2024</div>
<div class="t" style="left:203px;top:934.9px;width:124px;height:26.269999999999982px;line-height:26.269999999999982px;text-align:right;font-size:16.7px;color:#1a1a1a;-webkit-text-stroke:0.12px #1a1a1a">3:00 PM</div>
<div class="t" style="left:337px;top:934.9px;height:26.269999999999982px;line-height:26.269999999999982px;font-size:16.7px;color:#1a1a1a;-webkit-text-stroke:0.12px #1a1a1a;letter-spacing:0.75px">Caller Name 4</div>
<div class="t" style="left:778px;top:934.9px;height:26.269999999999982px;line-height:26.269999999999982px;font-size:16.7px;color:#1a1a1a;-webkit-text-stroke:0.12px #1a1a1a;letter-spacing:0.5px">xxx-xxx-xxxx</div>
<div style="left:510px;top:959.67px;width:121px;height:26.769999999999982px;background:#11734b"></div>
<div style="left:510px;top:985.9399999999999px;width:121px;height:1px;background:rgba(0,0,0,0.12)"></div>
<div class="t" style="left:514.5px;top:961.17px;height:26.269999999999982px;line-height:26.269999999999982px;font-size:16.7px;color:#d4edbc;letter-spacing:1.75px">Incoming</div>
<svg style="position:absolute;left:613.5px;top:970.9699999999999px;" width="9.5" height="5.3" viewBox="0 0 9.5 5.3"><path d="M0 0 H9.5 L4.75 5.3 Z" fill="#d9eedc"/></svg>
<div style="left:631px;top:959.67px;width:143.5px;height:26.769999999999982px;background:#ffcfc9"></div>
<div style="left:631px;top:985.9399999999999px;width:143.5px;height:1px;background:rgba(0,0,0,0.06)"></div>
<div class="t" style="left:636.5px;top:961.17px;height:26.269999999999982px;line-height:26.269999999999982px;font-size:16.7px;color:#b10202;letter-spacing:0.4px">No</div>
<svg style="position:absolute;left:756px;top:970.9699999999999px;" width="9.5" height="5.3" viewBox="0 0 9.5 5.3"><path d="M0 0 H9.5 L4.75 5.3 Z" fill="#b10202"/></svg>
<div class="t" style="left:49px;top:961.17px;width:150px;height:26.269999999999982px;line-height:26.269999999999982px;text-align:right;font-size:16.7px;color:#1a1a1a;-webkit-text-stroke:0.12px #1a1a1a;letter-spacing:0.85px">9/7/2024</div>
<div class="t" style="left:203px;top:961.17px;width:124px;height:26.269999999999982px;line-height:26.269999999999982px;text-align:right;font-size:16.7px;color:#1a1a1a;-webkit-text-stroke:0.12px #1a1a1a">9:35 AM</div>
<div class="t" style="left:337px;top:961.17px;height:26.269999999999982px;line-height:26.269999999999982px;font-size:16.7px;color:#1a1a1a;-webkit-text-stroke:0.12px #1a1a1a;letter-spacing:0.75px">Caller Name 1</div>
<div class="t" style="left:778px;top:961.17px;height:26.269999999999982px;line-height:26.269999999999982px;font-size:16.7px;color:#1a1a1a;-webkit-text-stroke:0.12px #1a1a1a;letter-spacing:0.5px">xxx-xxx-xxxx</div>
<div style="left:510px;top:985.9399999999999px;width:121px;height:26.770000000000095px;background:#11734b"></div>
<div style="left:510px;top:1012.21px;width:121px;height:1px;background:rgba(0,0,0,0.12)"></div>
<div class="t" style="left:514.5px;top:987.4399999999999px;height:26.270000000000095px;line-height:26.270000000000095px;font-size:16.7px;color:#d4edbc;letter-spacing:1.75px">Incoming</div>
<svg style="position:absolute;left:613.5px;top:997.2399999999999px;" width="9.5" height="5.3" viewBox="0 0 9.5 5.3"><path d="M0 0 H9.5 L4.75 5.3 Z" fill="#d9eedc"/></svg>
<div style="left:631px;top:985.9399999999999px;width:143.5px;height:26.770000000000095px;background:#ffe5a0"></div>
<div style="left:631px;top:1012.21px;width:143.5px;height:1px;background:rgba(0,0,0,0.06)"></div>
<div class="t" style="left:636.5px;top:987.4399999999999px;height:26.270000000000095px;line-height:26.270000000000095px;font-size:16.7px;color:#473821;letter-spacing:0.4px">Yes</div>
<svg style="position:absolute;left:756px;top:997.2399999999999px;" width="9.5" height="5.3" viewBox="0 0 9.5 5.3"><path d="M0 0 H9.5 L4.75 5.3 Z" fill="#9a7a14"/></svg>
<div class="t" style="left:49px;top:987.4399999999999px;width:150px;height:26.270000000000095px;line-height:26.270000000000095px;text-align:right;font-size:16.7px;color:#1a1a1a;-webkit-text-stroke:0.12px #1a1a1a;letter-spacing:0.85px">9/7/2024</div>
<div class="t" style="left:203px;top:987.4399999999999px;width:124px;height:26.270000000000095px;line-height:26.270000000000095px;text-align:right;font-size:16.7px;color:#1a1a1a;-webkit-text-stroke:0.12px #1a1a1a">11:25 AM</div>
<div class="t" style="left:337px;top:987.4399999999999px;height:26.270000000000095px;line-height:26.270000000000095px;font-size:16.7px;color:#1a1a1a;-webkit-text-stroke:0.12px #1a1a1a;letter-spacing:0.75px">Caller Name 2</div>
<div class="t" style="left:778px;top:987.4399999999999px;height:26.270000000000095px;line-height:26.270000000000095px;font-size:16.7px;color:#1a1a1a;-webkit-text-stroke:0.12px #1a1a1a;letter-spacing:0.5px">xxx-xxx-xxxx</div>
<div style="left:0px;top:1007px;width:1600px;height:16px;background:#fff"></div>
<div style="left:0px;top:1007px;width:49px;height:16px;background:#fff"></div>
<div style="left:48.5px;top:1007px;width:1px;height:16px;background:#e1e1e1"></div>
<div style="left:56px;top:1010px;width:1490px;height:11px;background:#dadce0;border-radius:6px"></div>
<div style="left:0px;top:1006.5px;width:1586px;height:1px;background:#e1e1e1"></div>
<div style="left:1548.5px;top:1007.5px;width:1px;height:15px;background:#e6e6e6"></div>
<div style="left:1568.5px;top:1007.5px;width:1px;height:15px;background:#e6e6e6"></div>
<div style="left:1549.5px;top:1008px;width:38px;height:14px;background:#f8f9fa"></div>
<div style="left:1568.5px;top:1007.5px;width:1px;height:15px;background:#e6e6e6"></div>
<svg style="position:absolute;left:1555px;top:1011px;" width="6" height="9" viewBox="0 0 6 9"><path d="M5.5 0 V9 L0 4.5 Z" fill="#8c8c8c"/></svg>
<svg style="position:absolute;left:1575.5px;top:1011px;" width="6" height="9" viewBox="0 0 6 9"><path d="M0.5 0 V9 L6 4.5 Z" fill="#8c8c8c"/></svg>
<div style="left:1586.5px;top:170px;width:13.5px;height:837px;background:#f8f9fa"></div>
<div style="left:1586px;top:170px;width:1.5px;height:853px;background:#c0c0c0"></div>
<div style="left:1587.5px;top:200.5px;width:12.5px;height:4.5px;background:#dadde2"></div>
<div style="left:1589.5px;top:410px;width:9px;height:31px;background:#dadce0;border-radius:5px"></div>
<div style="left:1587px;top:967px;width:13px;height:40px;background:#f8f9fa"></div>
<div style="left:1587px;top:986.5px;width:13px;height:1px;background:#e6e6e6"></div>
<svg style="position:absolute;left:1591.5px;top:974.5px;" width="8" height="5" viewBox="0 0 8 5"><path d="M0 5 H8 L4 0 Z" fill="#8c8c8c"/></svg>
<svg style="position:absolute;left:1591.5px;top:995.5px;" width="8" height="5" viewBox="0 0 8 5"><path d="M0 0 H8 L4 5 Z" fill="#8c8c8c"/></svg>
<div style="left:0px;top:1022px;width:1600px;height:45px;background:linear-gradient(#f9fafb,#eef0f2)"></div>
<div style="left:0px;top:1022px;width:1600px;height:1.5px;background:#e6e7e8"></div>
<svg style="position:absolute;left:63px;top:1041.5px;" width="13" height="13" viewBox="0 0 13 13"><path d="M6.5 0 V13 M0 6.5 H13" stroke="#444746" stroke-width="1.9"/></svg>
<svg style="position:absolute;left:111px;top:1042px;" width="17" height="12" viewBox="0 0 17 12"><path d="M0 1 H17 M0 6 H17 M0 11 H17" stroke="#444746" stroke-width="1.8"/></svg>
<div style="left:160px;top:1025px;width:113px;height:42px;background:linear-gradient(#e4ebf7,#dde5f2)"></div>
<div class="t" style="left:175px;top:1035px;height:26px;line-height:26px;font-size:18px;color:#0b57d0;-webkit-text-stroke:0.55px #0b57d0;letter-spacing:0.4px">Sheet1</div>
<svg style="position:absolute;left:248px;top:1046px;" width="11" height="6" viewBox="0 0 11 6"><path d="M0 0 H11 L5.5 6 Z" fill="#0b57d0"/></svg>
<div style="left:1366px;top:1029px;width:152px;height:36.5px;background:#c4eed0;border-radius:10px"></div>
<div class="t" style="left:1379px;top:1034px;height:26px;line-height:26px;font-size:17.5px;color:#072711;-webkit-text-stroke:0.45px #072711;letter-spacing:-0.25px">Sum: 2:08:12</div>
<svg style="position:absolute;left:1492px;top:1045px;" width="11" height="6" viewBox="0 0 11 6"><path d="M0 0 H11 L5.5 6 Z" fill="#072711"/></svg>
<svg style="position:absolute;left:1561px;top:1042px;" width="10" height="15" viewBox="0 0 10 15"><path d="M8.5 1 L2 7.5 L8.5 14" fill="none" stroke="#444746" stroke-width="2"/></svg>
<div style="left:977px;top:185px;width:404px;height:900px;background:#fff;border-radius:6px;box-shadow:0 2px 6px 2px rgba(60,64,67,.15),0 1px 2px rgba(60,64,67,.3)"></div>
<svg style="position:absolute;left:995px;top:204px;" width="19" height="19" viewBox="0 0 19 19"><circle cx="4" cy="4" r="2.9" fill="none" stroke="#444746" stroke-width="1.8"/><circle cx="4" cy="15" r="2.9" fill="none" stroke="#444746" stroke-width="1.8"/><path d="M6.3 5.8 L18 17.5 M6.3 13.2 L18 1.5" fill="none" stroke="#444746" stroke-width="1.8"/></svg>
<div class="t" style="left:1026.5px;top:193.3px;height:40px;line-height:40px;font-size:17.3px;color:#1f1f1f;letter-spacing:0.3px">Cut</div>
<div class="t" style="left:1160px;top:194.5px;width:200px;height:40px;line-height:40px;text-align:right;font-size:17px;color:#80868b;-webkit-text-stroke:0.45px #80868b;letter-spacing:0px">⌘X</div>
<svg style="position:absolute;left:995px;top:244px;" width="19" height="20" viewBox="0 0 19 20"><rect x="5" y="1" width="12.5" height="14.5" rx="1" fill="none" stroke="#444746" stroke-width="1.8"/><path d="M1 5 V19 H13" fill="none" stroke="#444746" stroke-width="1.8"/></svg>
<div class="t" style="left:1026.5px;top:233.3px;height:40px;line-height:40px;font-size:17.3px;color:#1f1f1f;letter-spacing:0.3px">Copy</div>
<div class="t" style="left:1160px;top:234.5px;width:200px;height:40px;line-height:40px;text-align:right;font-size:17px;color:#80868b;-webkit-text-stroke:0.45px #80868b;letter-spacing:0px">⌘C</div>
<svg style="position:absolute;left:995px;top:283.3px;" width="19" height="20" viewBox="0 0 19 20"><path d="M5.5 3.5 H2.5 Q1 3.5 1 5 V17.5 Q1 19 2.5 19 H16.5 Q18 19 18 17.5 V5 Q18 3.5 16.5 3.5 H13.5" fill="none" stroke="#444746" stroke-width="1.8"/><path d="M5.2 1.6 H7.3 A2.2 1.6 0 0 1 11.7 1.6 H13.8 V5.4 H5.2 Z" fill="#444746"/></svg>
<svg style="position:absolute;left:995px;top:323.3px;" width="19" height="20" viewBox="0 0 19 20"><path d="M5.5 3.5 H2.5 Q1 3.5 1 5 V17.5 Q1 19 2.5 19 H16.5 Q18 19 18 17.5 V5 Q18 3.5 16.5 3.5 H13.5" fill="none" stroke="#444746" stroke-width="1.8"/><path d="M5.2 1.6 H7.3 A2.2 1.6 0 0 1 11.7 1.6 H13.8 V5.4 H5.2 Z" fill="#444746"/></svg>
<div class="t" style="left:1026.5px;top:273.3px;height:40px;line-height:40px;font-size:17.3px;color:#1f1f1f;letter-spacing:0.3px">Paste</div>
<div class="t" style="left:1160px;top:274.5px;width:200px;height:40px;line-height:40px;text-align:right;font-size:17px;color:#80868b;-webkit-text-stroke:0.45px #80868b;letter-spacing:0px">⌘V</div>
<div class="t" style="left:1026.5px;top:313.3px;height:40px;line-height:40px;font-size:17.3px;color:#1f1f1f;letter-spacing:0.3px">Paste special</div>
<svg style="position:absolute;left:1350px;top:327.3px;" width="9" height="12" viewBox="0 0 9 12"><path d="M0 1 L8 6 L0 11 Z" fill="#747775"/></svg>
<div style="left:977px;top:364.3px;width:404px;height:1px;background:#dadce0"></div>
<svg style="position:absolute;left:998px;top:387.9px;" width="14" height="14" viewBox="0 0 14 14"><path d="M7 0 V14 M0 7 H14" stroke="#444746" stroke-width="1.8"/></svg>
<div class="t" style="left:1026.5px;top:374.9px;height:40px;line-height:40px;font-size:17.3px;color:#1f1f1f;letter-spacing:0.35px">Insert 82 rows above</div>
<svg style="position:absolute;left:998px;top:427.9px;" width="14" height="14" viewBox="0 0 14 14"><path d="M7 0 V14 M0 7 H14" stroke="#444746" stroke-width="1.8"/></svg>
<div class="t" style="left:1026.5px;top:414.9px;height:40px;line-height:40px;font-size:17.3px;color:#1f1f1f;letter-spacing:0.35px">Insert 2 columns left</div>
<svg style="position:absolute;left:998px;top:467.9px;" width="14" height="14" viewBox="0 0 14 14"><path d="M7 0 V14 M0 7 H14" stroke="#444746" stroke-width="1.8"/></svg>
<div class="t" style="left:1026.5px;top:454.9px;height:40px;line-height:40px;font-size:17.3px;color:#1f1f1f;letter-spacing:0.35px">Insert cells</div>
<svg style="position:absolute;left:1350px;top:468.9px;" width="9" height="12" viewBox="0 0 9 12"><path d="M0 1 L8 6 L0 11 Z" fill="#747775"/></svg>
<div style="left:977px;top:505.5px;width:404px;height:1px;background:#dadce0"></div>
<svg style="position:absolute;left:997px;top:526px;" width="16" height="20" viewBox="0 0 16 20"><path d="M1 4 H15 M5.5 3.5 V1.2 H10.5 V3.5" fill="none" stroke="#444746" stroke-width="1.8"/><path d="M3 4.5 V18.5 H13 V4.5" fill="none" stroke="#444746" stroke-width="1.8"/><path d="M6.3 7.5 V15.5 M9.7 7.5 V15.5" fill="none" stroke="#444746" stroke-width="1.8"/></svg>
<div class="t" style="left:1026.5px;top:516px;height:40px;line-height:40px;font-size:17.3px;color:#1f1f1f;letter-spacing:0.15px">Delete rows 7 - 88</div>
<svg style="position:absolute;left:997px;top:566px;" width="16" height="20" viewBox="0 0 16 20"><path d="M1 4 H15 M5.5 3.5 V1.2 H10.5 V3.5" fill="none" stroke="#444746" stroke-width="1.8"/><path d="M3 4.5 V18.5 H13 V4.5" fill="none" stroke="#444746" stroke-width="1.8"/><path d="M6.3 7.5 V15.5 M9.7 7.5 V15.5" fill="none" stroke="#444746" stroke-width="1.8"/></svg>
<div class="t" style="left:1026.5px;top:556px;height:40px;line-height:40px;font-size:17.3px;color:#1f1f1f;letter-spacing:0.15px">Delete columns G - H</div>
<svg style="position:absolute;left:997px;top:606px;" width="16" height="20" viewBox="0 0 16 20"><path d="M1 4 H15 M5.5 3.5 V1.2 H10.5 V3.5" fill="none" stroke="#444746" stroke-width="1.8"/><path d="M3 4.5 V18.5 H13 V4.5" fill="none" stroke="#444746" stroke-width="1.8"/><path d="M6.3 7.5 V15.5 M9.7 7.5 V15.5" fill="none" stroke="#444746" stroke-width="1.8"/></svg>
<div class="t" style="left:1026.5px;top:596px;height:40px;line-height:40px;font-size:17.3px;color:#1f1f1f;letter-spacing:0.15px">Delete cells</div>
<svg style="position:absolute;left:1350px;top:610px;" width="9" height="12" viewBox="0 0 9 12"><path d="M0 1 L8 6 L0 11 Z" fill="#747775"/></svg>
<div style="left:977px;top:647px;width:404px;height:1px;background:#dadce0"></div>
<svg style="position:absolute;left:995px;top:668px;" width="19" height="19" viewBox="0 0 19 19"><rect x="1" y="1" width="17" height="17" rx="1" fill="none" stroke="#444746" stroke-width="1.8"/><path d="M1 5.5 H18 M6.7 5.5 V18 M12.3 5.5 V18" fill="none" stroke="#444746" stroke-width="1.8"/></svg>
<div class="t" style="left:1026.5px;top:657px;height:40px;line-height:40px;font-size:17.3px;color:#1f1f1f;letter-spacing:0.3px">Convert to table</div>
<div style="left:1314px;top:667px;width:46px;height:21px;background:#188038;border-radius:11px"></div>
<div class="t" style="left:1314px;top:667px;height:21px;line-height:21px;width:46px;text-align:center;font-size:15px;font-weight:bold;color:#fff">New</div>
<svg style="position:absolute;left:997px;top:709px;" width="16" height="17" viewBox="0 0 16 17"><path d="M1 1 H15 L9.3 8 V16.5 H6.7 V8 Z" fill="none" stroke="#444746" stroke-width="1.8"/></svg>
<div class="t" style="left:1026.5px;top:697px;height:40px;line-height:40px;font-size:17.3px;color:#1f1f1f;letter-spacing:0.3px">Create a filter</div>
<div style="left:977px;top:748px;width:404px;height:1px;background:#dadce0"></div>
<svg style="position:absolute;left:994px;top:772.8px;" width="20" height="12" viewBox="0 0 20 12"><path d="M7.5 1.2 H5.5 A4.8 4.8 0 0 0 5.5 10.8 H7.5 M12.5 1.2 H14.5 A4.8 4.8 0 0 1 14.5 10.8 H12.5 M6 6 H14" fill="none" stroke="#444746" stroke-width="1.8"/></svg>
<div class="t" style="left:1026.5px;top:759px;height:40px;line-height:40px;font-size:17.3px;color:#1f1f1f;letter-spacing:0.35px">Insert link</div>
<svg style="position:absolute;left:995px;top:809.8px;" width="19" height="21" viewBox="0 0 19 21"><path d="M1 1 H18 V16 H5 L1 20 Z" fill="none" stroke="#444746" stroke-width="1.8"/><path d="M9.5 4.5 V12.5 M5.5 8.5 H13.5" fill="none" stroke="#444746" stroke-width="1.8"/></svg>
<div class="t" style="left:1026.5px;top:799px;height:40px;line-height:40px;font-size:17.3px;color:#1f1f1f;letter-spacing:0.35px">Comment</div>
<div class="t" style="left:1160px;top:800.2px;width:200px;height:40px;line-height:40px;text-align:right;font-size:17px;color:#80868b;-webkit-text-stroke:0.45px #80868b;letter-spacing:0.3px">⌘+Option+M</div>
<svg style="position:absolute;left:995px;top:850.8px;" width="19" height="19" viewBox="0 0 19 19"><path d="M1 1 H18 V12 L12 18 H1 Z" fill="none" stroke="#444746" stroke-width="1.8"/><path d="M5 6 H14 M5 10 H10" fill="none" stroke="#444746" stroke-width="1.8"/></svg>
<div class="t" style="left:1026.5px;top:839px;height:40px;line-height:40px;font-size:17.3px;color:#1f1f1f;letter-spacing:0.35px">Insert note</div>
<svg style="position:absolute;left:995px;top:890.8px;" width="19" height="19" viewBox="0 0 19 19"><rect x="1" y="1" width="17" height="17" rx="1" fill="none" stroke="#444746" stroke-width="1.8"/><path d="M1 5.5 H18 M6.7 5.5 V18 M12.3 5.5 V18" fill="none" stroke="#444746" stroke-width="1.8"/></svg>
<div class="t" style="left:1026.5px;top:879px;height:40px;line-height:40px;font-size:17.3px;color:#1f1f1f;letter-spacing:0.35px">Tables</div>
<svg style="position:absolute;left:993px;top:930.8px;" width="22" height="17" viewBox="0 0 22 17"><rect x="1" y="1.5" width="20" height="14" rx="7" fill="none" stroke="#444746" stroke-width="1.8"/><path d="M8 7 H14 L11 10.5 Z" fill="#444746"/></svg>
<div class="t" style="left:1026.5px;top:919px;height:40px;line-height:40px;font-size:17.3px;color:#1f1f1f;letter-spacing:0.35px">Dropdown</div>
<svg style="position:absolute;left:993px;top:970.8px;" width="22" height="19" viewBox="0 0 22 19"><rect x="1" y="1" width="13" height="9" rx="4.5" fill="none" stroke="#444746" stroke-width="1.8"/><rect x="7" y="8" width="14" height="9.5" rx="4.75" fill="#fff" stroke="#444746" stroke-width="1.8"/><circle cx="5" cy="5.5" r="1.5" fill="#444746"/><circle cx="16" cy="12.8" r="1.5" fill="#444746"/></svg>
<div class="t" style="left:1026.5px;top:959px;height:40px;line-height:40px;font-size:17.3px;color:#1f1f1f;letter-spacing:0.35px">Smart chips</div>
<svg style="position:absolute;left:1350px;top:973px;" width="9" height="12" viewBox="0 0 9 12"><path d="M0 1 L8 6 L0 11 Z" fill="#747775"/></svg>
<div style="left:977px;top:1009.3px;width:404px;height:1px;background:#dadce0"></div>
<div style="left:977px;top:1020.5px;width:404px;height:46.5px;background:linear-gradient(#f4f4f4,#ebebeb)"></div>
<svg style="position:absolute;left:1001px;top:1031px;" width="6" height="18" viewBox="0 0 6 18"><circle cx="3" cy="3" r="2" fill="#444746"/><circle cx="3" cy="9" r="2" fill="#444746"/><circle cx="3" cy="15" r="2" fill="#444746"/></svg>
<div class="t" style="left:1026.5px;top:1020px;height:40px;line-height:40px;font-size:17.3px;color:#1f1f1f;letter-spacing:0.5px">View more cell actions</div>
<svg style="position:absolute;left:1350px;top:1034px;" width="9" height="12" viewBox="0 0 9 12"><path d="M0 1 L8 6 L0 11 Z" fill="#1f1f1f"/></svg>
<div style="left:651px;top:742px;width:327px;height:319px;background:#fff;border-radius:6px;box-shadow:0 2px 6px 2px rgba(60,64,67,.15),0 1px 2px rgba(60,64,67,.3)"></div>
<div class="t" style="left:672.5px;top:750px;height:40px;line-height:40px;font-size:17.3px;color:#1f1f1f;letter-spacing:0.6px">Conditional formatting</div>
<div class="t" style="left:672.5px;top:790px;height:40px;line-height:40px;font-size:17.3px;color:#1f1f1f;letter-spacing:0.5px">Data validation</div>
<div style="left:651px;top:841px;width:327px;height:1px;background:#dadce0"></div>
<div class="t" style="left:672.5px;top:851px;height:40px;line-height:40px;font-size:17.3px;color:#1f1f1f;letter-spacing:0.4px">Get link to this range</div>
<div class="t" style="left:672.5px;top:891px;height:40px;line-height:40px;font-size:17.3px;color:#1f1f1f;letter-spacing:0.4px">Sort range</div>
<div class="t" style="left:672.5px;top:931px;height:40px;line-height:40px;font-size:17.3px;color:#1f1f1f;letter-spacing:0.4px">Randomize range</div>
<div class="t" style="left:672.5px;top:971px;height:40px;line-height:40px;font-size:17.3px;color:#1f1f1f;letter-spacing:0.4px">Define named range</div>
<div style="left:651px;top:1013px;width:327px;height:42px;background:#efefef"></div>
<div class="t" style="left:672.5px;top:1012px;height:40px;line-height:40px;font-size:17.3px;color:#1f1f1f;letter-spacing:0.4px">Protect range</div>
<div style="left:652px;top:1010.5px;width:333px;height:45.5px;border:5px solid #fd2510"></div>
</body></html>
